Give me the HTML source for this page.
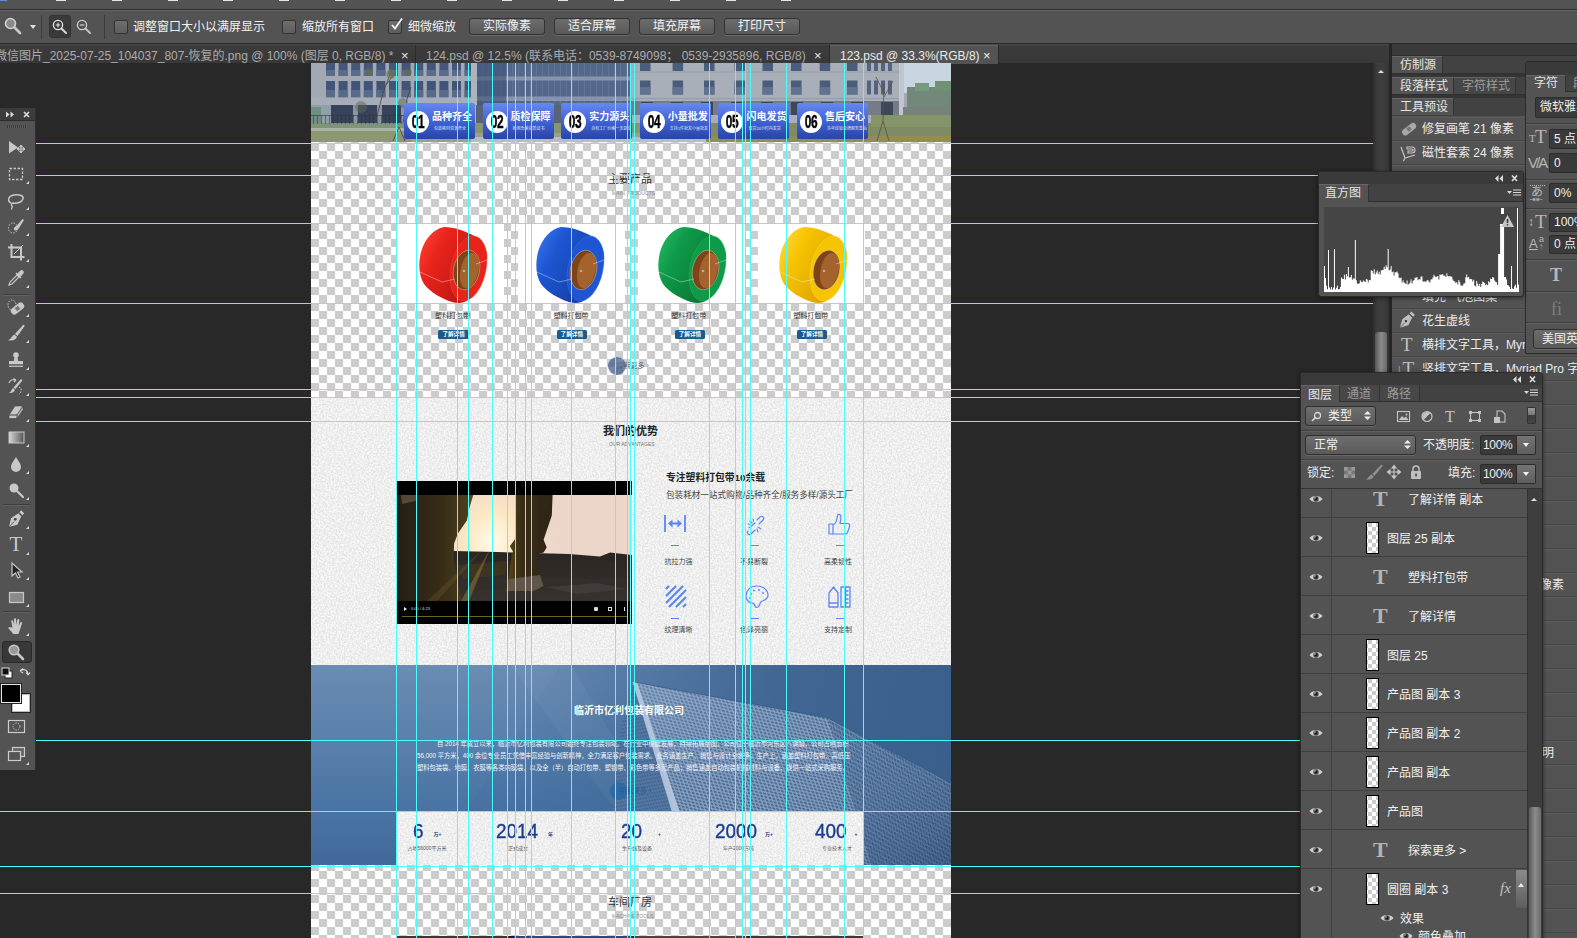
<!DOCTYPE html>
<html lang="zh-CN"><head><meta charset="utf-8"><title>Photoshop</title>
<style>
*{box-sizing:border-box}
html,body{margin:0;padding:0;overflow:hidden}
html{width:1577px;height:938px;background:#282828}
body{width:1577px;height:938px;overflow:hidden;background:#282828;position:relative;
 font-family:"Liberation Sans","Noto Sans CJK SC",sans-serif;font-size:12px;color:#e6e6e6;line-height:1}
.a{position:absolute}
.t{position:absolute;white-space:nowrap}
svg{position:absolute;overflow:visible}
#topstrip{left:0;top:0;width:1577px;height:9px;background:#535353}
#optbar{left:0;top:10px;width:1577px;height:33px;background:#535353;border-top:1px solid #666}
#tabbar{left:0;top:44px;width:1389px;height:19px;background:linear-gradient(#3c3c3c,#383838);border-top:1px solid #484848}
.cb{position:absolute;width:14px;height:14px;top:9px;border:1px solid #333;border-radius:2px;background:linear-gradient(#6f6f6f,#5d5d5d)}
.btn{position:absolute;top:7px;height:17px;width:76px;border:1px solid #333;border-radius:3px;background:linear-gradient(#6c6c6c,#595959);text-align:center;line-height:15px;color:#f0f0f0;box-shadow:0 1px 0 #6a6a6a}
.tab{position:absolute;top:0;height:19px;line-height:22px;color:#ababab;white-space:nowrap}
.hg{position:absolute;left:0;width:1373px;height:1px;background:#4afcfc}
.vg{position:absolute;top:0;width:1px;height:874px;background:#4afcfc}
</style></head><body>
<div class="a" id="topstrip"></div>
<div class="a" style="left:0;top:0;width:7px;height:1px;background:#5a8fd8"></div>
<div class="a" style="left:56.0px;top:0;width:10px;height:1px;background:#ece6da"></div>
<div class="a" style="left:111.8px;top:0;width:10px;height:1px;background:#ece6da"></div>
<div class="a" style="left:167.6px;top:0;width:10px;height:1px;background:#ece6da"></div>
<div class="a" style="left:223.4px;top:0;width:10px;height:1px;background:#ece6da"></div>
<div class="a" style="left:279.2px;top:0;width:10px;height:1px;background:#ece6da"></div>
<div class="a" style="left:335.0px;top:0;width:10px;height:1px;background:#ece6da"></div>
<div class="a" style="left:390.8px;top:0;width:10px;height:1px;background:#ece6da"></div>
<div class="a" style="left:446.6px;top:0;width:10px;height:1px;background:#ece6da"></div>
<div class="a" style="left:502.4px;top:0;width:10px;height:1px;background:#ece6da"></div>
<div class="a" style="left:558.2px;top:0;width:10px;height:1px;background:#ece6da"></div>
<div class="a" style="left:614.0px;top:0;width:10px;height:1px;background:#ece6da"></div>
<div class="a" style="left:669.8px;top:0;width:10px;height:1px;background:#ece6da"></div>
<div class="a" style="left:725.6px;top:0;width:10px;height:1px;background:#ece6da"></div>
<div class="a" style="left:781.4px;top:0;width:10px;height:1px;background:#ece6da"></div>
<div class="a" style="left:0;top:9px;width:1577px;height:1px;background:#2c2c2c"></div>
<div class="a" id="optbar">
<svg style="left:4px;top:6px" width="18" height="18" viewBox="0 0 18 18"><circle cx="6.5" cy="6.5" r="5" fill="#8a8a8a" stroke="#cfcfcf" stroke-width="1.6"/><path d="M10.5 10.5 L16 16" stroke="#c8c8c8" stroke-width="2.6" stroke-linecap="round"/></svg>
<div class="a" style="left:30px;top:14px;width:0;height:0;border-left:3px solid transparent;border-right:3px solid transparent;border-top:4px solid #e0e0e0"></div>
<div class="a" style="left:41px;top:4px;width:1px;height:24px;background:#3c3c3c"></div>
<div class="a" style="left:49px;top:4px;width:22px;height:23px;background:#3a3a3a;border-radius:3px;border:1px solid #333"></div>
<svg style="left:52px;top:8px" width="16" height="16" viewBox="0 0 16 16"><circle cx="6" cy="6" r="4.6" fill="none" stroke="#e6e6e6" stroke-width="1.3"/><path d="M9.5 9.5 L14 14" stroke="#d8d8d8" stroke-width="2" stroke-linecap="round"/><path d="M3.8 6h4.4M6 3.8v4.4" stroke="#e6e6e6" stroke-width="1.2"/></svg>
<svg style="left:76px;top:8px" width="16" height="16" viewBox="0 0 16 16"><circle cx="6" cy="6" r="4.6" fill="none" stroke="#d0d0d0" stroke-width="1.3"/><path d="M9.5 9.5 L14 14" stroke="#c4c4c4" stroke-width="2" stroke-linecap="round"/><path d="M3.8 6h4.4" stroke="#d0d0d0" stroke-width="1.2"/></svg>
<div class="a" style="left:104px;top:4px;width:1px;height:24px;background:#3c3c3c"></div>
<div class="cb" style="left:114px"></div><div class="t" style="left:133px;top:10px;color:#f2f2f2">调整窗口大小以满屏显示</div>
<div class="cb" style="left:282px"></div><div class="t" style="left:302px;top:10px;color:#f2f2f2">缩放所有窗口</div>
<div class="cb" style="left:388px"></div><svg style="left:390px;top:6px" width="14" height="14" viewBox="0 0 14 14"><path d="M2 8 L5 11.5 L12 1.5" fill="none" stroke="#f4f4f4" stroke-width="1.8"/></svg><div class="t" style="left:408px;top:10px;color:#f2f2f2">细微缩放</div>
<div class="btn" style="left:469px">实际像素</div>
<div class="btn" style="left:554px">适合屏幕</div>
<div class="btn" style="left:639px">填充屏幕</div>
<div class="btn" style="left:724px">打印尺寸</div>
</div>
<div class="a" style="left:0;top:43px;width:1577px;height:1px;background:#2a2a2a"></div>
<div class="a" id="tabbar">
<div class="tab" style="left:-5px">微信图片_2025-07-25_104037_807-恢复的.png @ 100% (图层 0, RGB/8) *</div>
<div class="tab" style="left:401px;color:#e8e8e8;font-size:13px">×</div>
<div class="a" style="left:415px;top:0;width:1px;height:19px;background:#2a2a2a"></div>
<div class="tab" style="left:426px">124.psd @ 12.5% (联系电话：0539-8749098； 0539-2935896, RGB/8)</div>
<div class="tab" style="left:814px;color:#e8e8e8;font-size:13px">×</div>
<div class="a" style="left:829px;top:0;width:1px;height:19px;background:#2a2a2a"></div>
<div class="a" style="left:830px;top:0;width:168px;height:19px;background:#535353;border-top:1px solid #666"></div>
<div class="tab" style="left:840px;color:#eaeaea">123.psd @ 33.3%(RGB/8)</div>
<div class="tab" style="left:983px;color:#f0f0f0;font-size:13px">×</div>
<div class="a" style="left:998px;top:0;width:1px;height:19px;background:#2a2a2a"></div>
</div>
<div class="a" id="doc" style="left:311px;top:63px;width:640px;height:875px;overflow:hidden"><div class="a" id="inner" style="left:-311px;top:-63px;width:1577px;height:938px">
<div class="a" style="left:311px;top:63px;width:640px;height:875px;background:conic-gradient(#fff 25%,#ccc 0 50%,#fff 0 75%,#ccc 0);background-size:16px 16px;background-position:0 0"></div>
<svg style="left:311px;top:63px" width="640" height="79" viewBox="0 0 640 79"><g filter="url(#bl)"><rect x="0.0" y="0.0" width="640.0" height="79.0" fill="#a2a9b4"/><rect x="15.0" y="0.0" width="9.0" height="13.0" fill="#45577a"/><rect x="15.0" y="7.0" width="9.0" height="6.0" fill="#5a6c8c"/><rect x="15.0" y="18.0" width="9.0" height="16.5" fill="#435578"/><rect x="15.0" y="27.0" width="9.0" height="7.5" fill="#586a8a"/><rect x="27.6" y="0.0" width="9.0" height="13.0" fill="#45577a"/><rect x="27.6" y="7.0" width="9.0" height="6.0" fill="#5a6c8c"/><rect x="27.6" y="18.0" width="9.0" height="16.5" fill="#435578"/><rect x="27.6" y="27.0" width="9.0" height="7.5" fill="#586a8a"/><rect x="40.2" y="0.0" width="9.0" height="13.0" fill="#45577a"/><rect x="40.2" y="7.0" width="9.0" height="6.0" fill="#5a6c8c"/><rect x="40.2" y="18.0" width="9.0" height="16.5" fill="#435578"/><rect x="40.2" y="27.0" width="9.0" height="7.5" fill="#586a8a"/><rect x="52.8" y="0.0" width="9.0" height="13.0" fill="#45577a"/><rect x="52.8" y="7.0" width="9.0" height="6.0" fill="#5a6c8c"/><rect x="52.8" y="18.0" width="9.0" height="16.5" fill="#435578"/><rect x="52.8" y="27.0" width="9.0" height="7.5" fill="#586a8a"/><rect x="65.4" y="0.0" width="9.0" height="13.0" fill="#45577a"/><rect x="65.4" y="7.0" width="9.0" height="6.0" fill="#5a6c8c"/><rect x="65.4" y="18.0" width="9.0" height="16.5" fill="#435578"/><rect x="65.4" y="27.0" width="9.0" height="7.5" fill="#586a8a"/><rect x="78.0" y="0.0" width="9.0" height="13.0" fill="#45577a"/><rect x="78.0" y="7.0" width="9.0" height="6.0" fill="#5a6c8c"/><rect x="78.0" y="18.0" width="9.0" height="16.5" fill="#435578"/><rect x="78.0" y="27.0" width="9.0" height="7.5" fill="#586a8a"/><rect x="90.6" y="0.0" width="9.0" height="13.0" fill="#45577a"/><rect x="90.6" y="7.0" width="9.0" height="6.0" fill="#5a6c8c"/><rect x="90.6" y="18.0" width="9.0" height="16.5" fill="#435578"/><rect x="90.6" y="27.0" width="9.0" height="7.5" fill="#586a8a"/><rect x="103.2" y="0.0" width="9.0" height="13.0" fill="#45577a"/><rect x="103.2" y="7.0" width="9.0" height="6.0" fill="#5a6c8c"/><rect x="103.2" y="18.0" width="9.0" height="16.5" fill="#435578"/><rect x="103.2" y="27.0" width="9.0" height="7.5" fill="#586a8a"/><rect x="115.8" y="0.0" width="9.0" height="13.0" fill="#45577a"/><rect x="115.8" y="7.0" width="9.0" height="6.0" fill="#5a6c8c"/><rect x="115.8" y="18.0" width="9.0" height="16.5" fill="#435578"/><rect x="115.8" y="27.0" width="9.0" height="7.5" fill="#586a8a"/><rect x="128.4" y="0.0" width="9.0" height="13.0" fill="#45577a"/><rect x="128.4" y="7.0" width="9.0" height="6.0" fill="#5a6c8c"/><rect x="128.4" y="18.0" width="9.0" height="16.5" fill="#435578"/><rect x="128.4" y="27.0" width="9.0" height="7.5" fill="#586a8a"/><rect x="141.0" y="0.0" width="9.0" height="13.0" fill="#45577a"/><rect x="141.0" y="7.0" width="9.0" height="6.0" fill="#5a6c8c"/><rect x="141.0" y="18.0" width="9.0" height="16.5" fill="#435578"/><rect x="141.0" y="27.0" width="9.0" height="7.5" fill="#586a8a"/><rect x="153.6" y="0.0" width="9.0" height="13.0" fill="#45577a"/><rect x="153.6" y="7.0" width="9.0" height="6.0" fill="#5a6c8c"/><rect x="153.6" y="18.0" width="9.0" height="16.5" fill="#435578"/><rect x="153.6" y="27.0" width="9.0" height="7.5" fill="#586a8a"/><rect x="0.0" y="34.5" width="165.0" height="7.5" fill="#a7adb8"/><rect x="20.0" y="42.0" width="145.0" height="18.0" fill="#39435a"/><rect x="42.0" y="42.0" width="5.0" height="18.0" fill="#8d95a2"/><rect x="66.0" y="42.0" width="5.0" height="18.0" fill="#8d95a2"/><rect x="90.0" y="42.0" width="5.0" height="18.0" fill="#8d95a2"/><rect x="114.0" y="42.0" width="5.0" height="18.0" fill="#8d95a2"/><rect x="138.0" y="42.0" width="5.0" height="18.0" fill="#8d95a2"/><rect x="162.0" y="42.0" width="5.0" height="18.0" fill="#8d95a2"/><rect x="0.0" y="42.0" width="20.0" height="18.0" fill="#8fa0a8"/><rect x="0.0" y="44.0" width="10.0" height="16.0" fill="#6f8f84"/><rect x="165.0" y="0.0" width="155.0" height="42.0" fill="#55688b"/><rect x="165.0" y="0.0" width="1.0" height="42.0" fill="#6a80a2" opacity=".5"/><rect x="171.0" y="0.0" width="1.0" height="42.0" fill="#6a80a2" opacity=".5"/><rect x="177.0" y="0.0" width="1.0" height="42.0" fill="#6a80a2" opacity=".5"/><rect x="183.0" y="0.0" width="1.0" height="42.0" fill="#6a80a2" opacity=".5"/><rect x="189.0" y="0.0" width="1.0" height="42.0" fill="#6a80a2" opacity=".5"/><rect x="195.0" y="0.0" width="1.0" height="42.0" fill="#6a80a2" opacity=".5"/><rect x="201.0" y="0.0" width="1.0" height="42.0" fill="#6a80a2" opacity=".5"/><rect x="207.0" y="0.0" width="1.0" height="42.0" fill="#6a80a2" opacity=".5"/><rect x="213.0" y="0.0" width="1.0" height="42.0" fill="#6a80a2" opacity=".5"/><rect x="219.0" y="0.0" width="1.0" height="42.0" fill="#6a80a2" opacity=".5"/><rect x="225.0" y="0.0" width="1.0" height="42.0" fill="#6a80a2" opacity=".5"/><rect x="231.0" y="0.0" width="1.0" height="42.0" fill="#6a80a2" opacity=".5"/><rect x="237.0" y="0.0" width="1.0" height="42.0" fill="#6a80a2" opacity=".5"/><rect x="243.0" y="0.0" width="1.0" height="42.0" fill="#6a80a2" opacity=".5"/><rect x="249.0" y="0.0" width="1.0" height="42.0" fill="#6a80a2" opacity=".5"/><rect x="255.0" y="0.0" width="1.0" height="42.0" fill="#6a80a2" opacity=".5"/><rect x="261.0" y="0.0" width="1.0" height="42.0" fill="#6a80a2" opacity=".5"/><rect x="267.0" y="0.0" width="1.0" height="42.0" fill="#6a80a2" opacity=".5"/><rect x="273.0" y="0.0" width="1.0" height="42.0" fill="#6a80a2" opacity=".5"/><rect x="279.0" y="0.0" width="1.0" height="42.0" fill="#6a80a2" opacity=".5"/><rect x="285.0" y="0.0" width="1.0" height="42.0" fill="#6a80a2" opacity=".5"/><rect x="291.0" y="0.0" width="1.0" height="42.0" fill="#6a80a2" opacity=".5"/><rect x="297.0" y="0.0" width="1.0" height="42.0" fill="#6a80a2" opacity=".5"/><rect x="303.0" y="0.0" width="1.0" height="42.0" fill="#6a80a2" opacity=".5"/><rect x="309.0" y="0.0" width="1.0" height="42.0" fill="#6a80a2" opacity=".5"/><rect x="315.0" y="0.0" width="1.0" height="42.0" fill="#6a80a2" opacity=".5"/><rect x="165.0" y="13.5" width="155.0" height="4.0" fill="#8795aa"/><rect x="165.0" y="33.5" width="155.0" height="4.5" fill="#8795aa"/><rect x="165.0" y="0.0" width="30.0" height="42.0" fill="#3f5378" opacity=".6"/><rect x="160.0" y="0.0" width="6.0" height="60.0" fill="#aeb4bd"/><rect x="165.0" y="42.0" width="155.0" height="18.0" fill="#59647a"/><rect x="320.0" y="0.0" width="272.0" height="60.0" fill="#a9afb9"/><rect x="329.0" y="0.0" width="10.5" height="8.0" fill="#4c5d7c"/><rect x="329.0" y="17.5" width="10.5" height="14.0" fill="#4a5b7a"/><rect x="329.0" y="24.0" width="10.5" height="7.5" fill="#61728e"/><rect x="361.6" y="0.0" width="10.5" height="8.0" fill="#4c5d7c"/><rect x="361.6" y="17.5" width="10.5" height="14.0" fill="#4a5b7a"/><rect x="361.6" y="24.0" width="10.5" height="7.5" fill="#61728e"/><rect x="393.0" y="0.0" width="10.5" height="8.0" fill="#4c5d7c"/><rect x="393.0" y="17.5" width="10.5" height="14.0" fill="#4a5b7a"/><rect x="393.0" y="24.0" width="10.5" height="7.5" fill="#61728e"/><rect x="423.5" y="0.0" width="10.5" height="8.0" fill="#4c5d7c"/><rect x="423.5" y="17.5" width="10.5" height="14.0" fill="#4a5b7a"/><rect x="423.5" y="24.0" width="10.5" height="7.5" fill="#61728e"/><rect x="451.5" y="0.0" width="10.5" height="8.0" fill="#4c5d7c"/><rect x="451.5" y="17.5" width="10.5" height="14.0" fill="#4a5b7a"/><rect x="451.5" y="24.0" width="10.5" height="7.5" fill="#61728e"/><rect x="480.0" y="0.0" width="10.5" height="8.0" fill="#4c5d7c"/><rect x="480.0" y="17.5" width="10.5" height="14.0" fill="#4a5b7a"/><rect x="480.0" y="24.0" width="10.5" height="7.5" fill="#61728e"/><rect x="508.7" y="0.0" width="10.5" height="8.0" fill="#4c5d7c"/><rect x="508.7" y="17.5" width="10.5" height="14.0" fill="#4a5b7a"/><rect x="508.7" y="24.0" width="10.5" height="7.5" fill="#61728e"/><rect x="536.0" y="0.0" width="10.5" height="8.0" fill="#4c5d7c"/><rect x="536.0" y="17.5" width="10.5" height="14.0" fill="#4a5b7a"/><rect x="536.0" y="24.0" width="10.5" height="7.5" fill="#61728e"/><rect x="556.0" y="0.0" width="4.0" height="8.0" fill="#55647e"/><rect x="556.0" y="17.5" width="4.0" height="14.0" fill="#55647e"/><rect x="563.0" y="0.0" width="4.0" height="8.0" fill="#55647e"/><rect x="563.0" y="17.5" width="4.0" height="14.0" fill="#55647e"/><rect x="570.0" y="0.0" width="4.0" height="8.0" fill="#55647e"/><rect x="570.0" y="17.5" width="4.0" height="14.0" fill="#55647e"/><rect x="577.0" y="0.0" width="4.0" height="8.0" fill="#55647e"/><rect x="577.0" y="17.5" width="4.0" height="14.0" fill="#55647e"/><rect x="320.0" y="8.5" width="272.0" height="1.0" fill="#9aa0aa"/><rect x="320.0" y="35.0" width="272.0" height="1.2" fill="#979da7"/><rect x="320.0" y="38.0" width="272.0" height="14.0" fill="#747c88"/><rect x="330.0" y="39.0" width="12.0" height="13.0" fill="#3e4656"/><rect x="360.0" y="39.0" width="12.0" height="13.0" fill="#3e4656"/><rect x="390.0" y="39.0" width="12.0" height="13.0" fill="#3e4656"/><rect x="420.0" y="39.0" width="12.0" height="13.0" fill="#3e4656"/><rect x="450.0" y="39.0" width="12.0" height="13.0" fill="#3e4656"/><rect x="480.0" y="39.0" width="12.0" height="13.0" fill="#3e4656"/><rect x="510.0" y="39.0" width="12.0" height="13.0" fill="#3e4656"/><rect x="540.0" y="39.0" width="12.0" height="13.0" fill="#3e4656"/><rect x="570.0" y="39.0" width="12.0" height="13.0" fill="#3e4656"/><rect x="592.0" y="0.0" width="48.0" height="30.0" fill="#c9d5e1"/><rect x="588.0" y="0.0" width="5.0" height="52.0" fill="#c2c6cc"/><rect x="596.0" y="24.0" width="44.0" height="24.0" fill="#71887a"/><rect x="604.0" y="20.0" width="14.0" height="8.0" fill="#789a7c"/><rect x="624.0" y="18.0" width="16.0" height="10.0" fill="#6f9174"/><rect x="592.0" y="44.0" width="48.0" height="8.0" fill="#76827c"/><rect x="0.0" y="60.0" width="640.0" height="19.0" fill="#87956f"/><rect x="0.0" y="60.0" width="100.0" height="6.0" fill="#7f9478"/><rect x="0.0" y="65.0" width="100.0" height="3.0" fill="#a9b3a6"/><rect x="0.0" y="68.0" width="100.0" height="11.0" fill="#8b9872"/><rect x="100.0" y="70.0" width="300.0" height="9.0" fill="#9aa08c"/><rect x="160.0" y="74.0" width="240.0" height="5.0" fill="#b9bdc2"/><rect x="400.0" y="60.0" width="240.0" height="19.0" fill="#7f8b66"/><rect x="395.0" y="73.0" width="245.0" height="6.0" fill="#8f8f50"/><rect x="560.0" y="52.0" width="80.0" height="12.0" fill="#86946a"/><rect x="2.0" y="52.0" width="0.7" height="9.0" fill="#2c3438" opacity=".7"/><rect x="6.0" y="52.0" width="0.7" height="9.0" fill="#2c3438" opacity=".7"/><rect x="10.0" y="52.0" width="0.7" height="9.0" fill="#2c3438" opacity=".7"/><rect x="14.0" y="52.0" width="0.7" height="9.0" fill="#2c3438" opacity=".7"/><rect x="18.0" y="52.0" width="0.7" height="9.0" fill="#2c3438" opacity=".7"/><rect x="22.0" y="52.0" width="0.7" height="9.0" fill="#2c3438" opacity=".7"/><rect x="26.0" y="52.0" width="0.7" height="9.0" fill="#2c3438" opacity=".7"/><rect x="30.0" y="52.0" width="0.7" height="9.0" fill="#2c3438" opacity=".7"/><rect x="34.0" y="52.0" width="0.7" height="9.0" fill="#2c3438" opacity=".7"/><rect x="38.0" y="52.0" width="0.7" height="9.0" fill="#2c3438" opacity=".7"/><rect x="42.0" y="52.0" width="0.7" height="9.0" fill="#2c3438" opacity=".7"/><rect x="46.0" y="52.0" width="0.7" height="9.0" fill="#2c3438" opacity=".7"/><rect x="50.0" y="52.0" width="0.7" height="9.0" fill="#2c3438" opacity=".7"/><rect x="54.0" y="52.0" width="0.7" height="9.0" fill="#2c3438" opacity=".7"/><rect x="58.0" y="52.0" width="0.7" height="9.0" fill="#2c3438" opacity=".7"/><rect x="62.0" y="52.0" width="0.7" height="9.0" fill="#2c3438" opacity=".7"/><rect x="66.0" y="52.0" width="0.7" height="9.0" fill="#2c3438" opacity=".7"/><rect x="70.0" y="52.0" width="0.7" height="9.0" fill="#2c3438" opacity=".7"/><rect x="74.0" y="52.0" width="0.7" height="9.0" fill="#2c3438" opacity=".7"/><rect x="78.0" y="52.0" width="0.7" height="9.0" fill="#2c3438" opacity=".7"/><rect x="82.0" y="52.0" width="0.7" height="9.0" fill="#2c3438" opacity=".7"/><rect x="86.0" y="52.0" width="0.7" height="9.0" fill="#2c3438" opacity=".7"/><rect x="90.0" y="52.0" width="0.7" height="9.0" fill="#2c3438" opacity=".7"/><rect x="94.0" y="52.0" width="0.7" height="9.0" fill="#2c3438" opacity=".7"/><rect x="0.0" y="52.0" width="96.0" height="0.8" fill="#2c3438" opacity=".7"/><path d="M64 60 L72 30 L78 14 M72 30 L66 18 M75 22 L84 10 M92 60 L96 36 L100 24 M82 78 L88 64 L94 78" stroke="#4a4638" stroke-width="1" fill="none" opacity=".8"/><circle cx="58" cy="9" r="4" fill="#5f6a4c" opacity=".7"/><circle cx="80" cy="11" r="4.500" fill="#66704e" opacity=".7"/><circle cx="97" cy="9" r="3.500" fill="#5f6a4c" opacity=".7"/><circle cx="50" cy="44" r="6" fill="#5c6c58" opacity=".5"/><circle cx="92" cy="40" r="5" fill="#5c6c58" opacity=".5"/><path d="M566 78 L572 58 L578 78 M572 58 L573 20 M573 30 L565 14 M573 34 L582 18" stroke="#5a5244" stroke-width="1" fill="none" opacity=".8"/></g><defs><filter id="bl" x="0" y="0" width="100%" height="100%"><feGaussianBlur stdDeviation="0.45"/></filter></defs></svg>
<div class="a" style="left:404.0px;top:103px;width:71px;height:36px;border-radius:2px;background:linear-gradient(#6688f2,#3c5ccc 60%,#2a44a6)">
<div class="a" style="left:3px;top:7.500px;width:22px;height:22px;border-radius:11px;background:#fff;"></div><div class="a" style="left:3px;top:7.500px;width:22px;height:22px;transform:scaleX(.66);color:#000;font-weight:bold;font-size:18px;line-height:22.5px;text-align:center;letter-spacing:-.5px;-webkit-text-stroke:.45px #000">01</div>
<div class="t" style="left:28px;top:8.500px;font-size:10px;font-weight:bold;color:#fff">品种齐全</div>
<div class="t" style="left:30px;top:23.500px;font-size:4px;color:#dfe6ff;transform-origin:0 0">包装耗材资源齐全</div>
</div>
<div class="a" style="left:482.6px;top:103px;width:71px;height:36px;border-radius:2px;background:linear-gradient(#6688f2,#3c5ccc 60%,#2a44a6)">
<div class="a" style="left:3px;top:7.500px;width:22px;height:22px;border-radius:11px;background:#fff;"></div><div class="a" style="left:3px;top:7.500px;width:22px;height:22px;transform:scaleX(.66);color:#000;font-weight:bold;font-size:18px;line-height:22.5px;text-align:center;letter-spacing:-.5px;-webkit-text-stroke:.45px #000">02</div>
<div class="t" style="left:28px;top:8.500px;font-size:10px;font-weight:bold;color:#fff">质检保障</div>
<div class="t" style="left:30px;top:23.500px;font-size:4px;color:#dfe6ff;transform-origin:0 0">检测合格资质证书</div>
</div>
<div class="a" style="left:561.2px;top:103px;width:71px;height:36px;border-radius:2px;background:linear-gradient(#6688f2,#3c5ccc 60%,#2a44a6)">
<div class="a" style="left:3px;top:7.500px;width:22px;height:22px;border-radius:11px;background:#fff;"></div><div class="a" style="left:3px;top:7.500px;width:22px;height:22px;transform:scaleX(.66);color:#000;font-weight:bold;font-size:18px;line-height:22.5px;text-align:center;letter-spacing:-.5px;-webkit-text-stroke:.45px #000">03</div>
<div class="t" style="left:28px;top:8.500px;font-size:10px;font-weight:bold;color:#fff">实力源头</div>
<div class="t" style="left:30px;top:23.500px;font-size:4px;color:#dfe6ff;transform-origin:0 0">自有工厂价格一步到位</div>
</div>
<div class="a" style="left:639.8px;top:103px;width:71px;height:36px;border-radius:2px;background:linear-gradient(#6688f2,#3c5ccc 60%,#2a44a6)">
<div class="a" style="left:3px;top:7.500px;width:22px;height:22px;border-radius:11px;background:#fff;"></div><div class="a" style="left:3px;top:7.500px;width:22px;height:22px;transform:scaleX(.66);color:#000;font-weight:bold;font-size:18px;line-height:22.5px;text-align:center;letter-spacing:-.5px;-webkit-text-stroke:.45px #000">04</div>
<div class="t" style="left:28px;top:8.500px;font-size:10px;font-weight:bold;color:#fff">小量批发</div>
<div class="t" style="left:30px;top:23.500px;font-size:4px;color:#dfe6ff;transform-origin:0 0">支持1件批发小量批发</div>
</div>
<div class="a" style="left:718.4px;top:103px;width:71px;height:36px;border-radius:2px;background:linear-gradient(#6688f2,#3c5ccc 60%,#2a44a6)">
<div class="a" style="left:3px;top:7.500px;width:22px;height:22px;border-radius:11px;background:#fff;"></div><div class="a" style="left:3px;top:7.500px;width:22px;height:22px;transform:scaleX(.66);color:#000;font-weight:bold;font-size:18px;line-height:22.5px;text-align:center;letter-spacing:-.5px;-webkit-text-stroke:.45px #000">05</div>
<div class="t" style="left:28px;top:8.500px;font-size:10px;font-weight:bold;color:#fff">闪电发货</div>
<div class="t" style="left:30px;top:23.500px;font-size:4px;color:#dfe6ff;transform-origin:0 0">现货24小时内发货</div>
</div>
<div class="a" style="left:797.0px;top:103px;width:71px;height:36px;border-radius:2px;background:linear-gradient(#6688f2,#3c5ccc 60%,#2a44a6)">
<div class="a" style="left:3px;top:7.500px;width:22px;height:22px;border-radius:11px;background:#fff;"></div><div class="a" style="left:3px;top:7.500px;width:22px;height:22px;transform:scaleX(.66);color:#000;font-weight:bold;font-size:18px;line-height:22.5px;text-align:center;letter-spacing:-.5px;-webkit-text-stroke:.45px #000">06</div>
<div class="t" style="left:28px;top:8.500px;font-size:10px;font-weight:bold;color:#fff">售后安心</div>
<div class="t" style="left:30px;top:23.500px;font-size:4px;color:#dfe6ff;transform-origin:0 0">多年经验金牌服务售后</div>
</div>
<div class="t" style="left:608px;top:174px;font-size:11px;color:#333">主要产品</div>
<div class="t" style="left:612px;top:191px;font-size:5px;color:#8a8a8a;letter-spacing:.1px">MAIN PRODUCTS</div>
<div class="a" style="left:397px;top:224px;width:107px;height:79px;background:#fff"></div>
<svg style="left:398px;top:224px" width="107" height="79" viewBox="0 0 107 79">
<defs><linearGradient id="rg0" x1="0" y1="0" x2="1" y2=".6"><stop offset="0" stop-color="#ff4a38"/><stop offset=".35" stop-color="#e8231c"/><stop offset="1" stop-color="#b51410"/></linearGradient></defs>
<path d="M46 3 C36 5 27 14 23 28 C20 40 21 52 26 60 C32 68 44 75 54 78 C60 80 66 79 70 76 C80 68 87 52 89 36 C90 26 86 18 78 13 C68 7 56 3 46 3 Z" fill="url(#rg0)"/>
<ellipse cx="70.500" cy="44.500" rx="17.500" ry="33" transform="rotate(12 70.500 44.500)" fill="#e8231c" stroke="#ff4a38" stroke-width=".7" stroke-opacity=".6"/>
<ellipse cx="68.500" cy="46" rx="13" ry="20" transform="rotate(12 68.500 46)" fill="#7c4418" stroke="#e8d8c0" stroke-width=".4"/>
<ellipse cx="71.500" cy="46.500" rx="9" ry="18" transform="rotate(12 71.500 46.500)" fill="#a4622c"/>
<circle cx="66" cy="47" r="1.300" fill="#b8b0a8"/>
<path d="M22 48 L44 58 L57 55 M78 40 L89 36" stroke="#fff" stroke-width=".5" fill="none" opacity=".75"/>
</svg>
<div class="t" style="left:422.4px;top:312px;width:60px;text-align:center;font-size:7px;color:#333">塑料打包带</div>
<div class="a" style="left:438.4px;top:330px;width:30.4px;height:8.6px;background:#185b8e;border-radius:1.5px;color:#fff;font-size:5.6px;line-height:8.6px;text-align:center;font-weight:bold">了解详情</div>
<div class="a" style="left:518px;top:224px;width:107px;height:79px;background:#fff"></div>
<svg style="left:515px;top:224px" width="107" height="79" viewBox="0 0 107 79">
<defs><linearGradient id="rg1" x1="0" y1="0" x2="1" y2=".6"><stop offset="0" stop-color="#3a7af0"/><stop offset=".35" stop-color="#1d55d2"/><stop offset="1" stop-color="#123c9c"/></linearGradient></defs>
<path d="M46 3 C36 5 27 14 23 28 C20 40 21 52 26 60 C32 68 44 75 54 78 C60 80 66 79 70 76 C80 68 87 52 89 36 C90 26 86 18 78 13 C68 7 56 3 46 3 Z" fill="url(#rg1)"/>
<ellipse cx="70.500" cy="44.500" rx="17.500" ry="33" transform="rotate(12 70.500 44.500)" fill="#1d55d2" stroke="#3a7af0" stroke-width=".7" stroke-opacity=".6"/>
<ellipse cx="68.500" cy="46" rx="13" ry="20" transform="rotate(12 68.500 46)" fill="#7c4418" stroke="#e8d8c0" stroke-width=".4"/>
<ellipse cx="71.500" cy="46.500" rx="9" ry="18" transform="rotate(12 71.500 46.500)" fill="#a4622c"/>
<circle cx="66" cy="47" r="1.300" fill="#b8b0a8"/>
<path d="M22 48 L44 58 L57 55 M78 40 L89 36" stroke="#fff" stroke-width=".5" fill="none" opacity=".75"/>
</svg>
<div class="t" style="left:541.1px;top:312px;width:60px;text-align:center;font-size:7px;color:#333">塑料打包带</div>
<div class="a" style="left:556.6px;top:330px;width:30.4px;height:8.6px;background:#185b8e;border-radius:1.5px;color:#fff;font-size:5.6px;line-height:8.6px;text-align:center;font-weight:bold">了解详情</div>
<div class="a" style="left:638px;top:224px;width:107px;height:79px;background:#fff"></div>
<svg style="left:637px;top:224px" width="107" height="79" viewBox="0 0 107 79">
<defs><linearGradient id="rg2" x1="0" y1="0" x2="1" y2=".6"><stop offset="0" stop-color="#28c06a"/><stop offset=".35" stop-color="#0e9a48"/><stop offset="1" stop-color="#08702f"/></linearGradient></defs>
<path d="M46 3 C36 5 27 14 23 28 C20 40 21 52 26 60 C32 68 44 75 54 78 C60 80 66 79 70 76 C80 68 87 52 89 36 C90 26 86 18 78 13 C68 7 56 3 46 3 Z" fill="url(#rg2)"/>
<ellipse cx="70.500" cy="44.500" rx="17.500" ry="33" transform="rotate(12 70.500 44.500)" fill="#0e9a48" stroke="#28c06a" stroke-width=".7" stroke-opacity=".6"/>
<ellipse cx="68.500" cy="46" rx="13" ry="20" transform="rotate(12 68.500 46)" fill="#7c4418" stroke="#e8d8c0" stroke-width=".4"/>
<ellipse cx="71.500" cy="46.500" rx="9" ry="18" transform="rotate(12 71.500 46.500)" fill="#a4622c"/>
<circle cx="66" cy="47" r="1.300" fill="#b8b0a8"/>
<path d="M22 48 L44 58 L57 55 M78 40 L89 36" stroke="#fff" stroke-width=".5" fill="none" opacity=".75"/>
</svg>
<div class="t" style="left:658.8px;top:312px;width:60px;text-align:center;font-size:7px;color:#333">塑料打包带</div>
<div class="a" style="left:674.7px;top:330px;width:30.4px;height:8.6px;background:#185b8e;border-radius:1.5px;color:#fff;font-size:5.6px;line-height:8.6px;text-align:center;font-weight:bold">了解详情</div>
<div class="a" style="left:758px;top:224px;width:107px;height:79px;background:#fff"></div>
<svg style="left:758px;top:224px" width="107" height="79" viewBox="0 0 107 79">
<defs><linearGradient id="rg3" x1="0" y1="0" x2="1" y2=".6"><stop offset="0" stop-color="#ffe04a"/><stop offset=".35" stop-color="#f6c400"/><stop offset="1" stop-color="#d89c00"/></linearGradient></defs>
<path d="M46 3 C36 5 27 14 23 28 C20 40 21 52 26 60 C32 68 44 75 54 78 C60 80 66 79 70 76 C80 68 87 52 89 36 C90 26 86 18 78 13 C68 7 56 3 46 3 Z" fill="url(#rg3)"/>
<ellipse cx="70.500" cy="44.500" rx="17.500" ry="33" transform="rotate(12 70.500 44.500)" fill="#f6c400" stroke="#ffe04a" stroke-width=".7" stroke-opacity=".6"/>
<ellipse cx="68.500" cy="46" rx="13" ry="20" transform="rotate(12 68.500 46)" fill="#7c4418" stroke="#e8d8c0" stroke-width=".4"/>
<ellipse cx="71.500" cy="46.500" rx="9" ry="18" transform="rotate(12 71.500 46.500)" fill="#a4622c"/>
<circle cx="66" cy="47" r="1.300" fill="#b8b0a8"/>
<path d="M22 48 L44 58 L57 55 M78 40 L89 36" stroke="#fff" stroke-width=".5" fill="none" opacity=".75"/>
</svg>
<div class="t" style="left:780.7px;top:312px;width:60px;text-align:center;font-size:7px;color:#333">塑料打包带</div>
<div class="a" style="left:796.7px;top:330px;width:30.4px;height:8.6px;background:#185b8e;border-radius:1.5px;color:#fff;font-size:5.6px;line-height:8.6px;text-align:center;font-weight:bold">了解详情</div>
<div class="a" style="left:608px;top:357px;width:17.5px;height:18px;border-radius:9px;background:rgba(58,90,140,.72)"></div>
<div class="t" style="left:616.5px;top:361.5px;font-size:7px;color:#5a6478">探索更多 ›</div>
<svg width="0" height="0"><filter id="nz" x="0" y="0" width="100%" height="100%"><feTurbulence type="fractalNoise" baseFrequency="0.6" numOctaves="2" seed="3" result="n"/><feColorMatrix type="matrix" values="0 0 0 0 1  0 0 0 0 1  0 0 0 0 1  1.7 0 0 0 -0.42"/></filter></svg>
<div class="a" style="left:311px;top:398px;width:640px;height:267px;background:#e2e2e2"></div>
<div class="a" style="left:311px;top:398px;width:640px;height:267px;filter:url(#nz);opacity:1"></div>
<div class="t" style="left:603px;top:425.5px;font-size:11px;font-weight:bold;color:#222">我们的优势</div>
<div class="t" style="left:609px;top:442px;font-size:5px;color:#777">OUR ADVANTAGES</div>
<div class="a" style="left:397px;top:481px;width:235px;height:143px;background:#000;overflow:hidden">
<div class="a" style="left:0;top:14px;width:235px;height:106px;background:radial-gradient(ellipse 62px 70px at 96px 46px,#fffbe9 0,#fbe9c4 40%,#f3dcc6 75%,#ecd6ca 100%)"></div>
<svg style="left:0;top:14px" width="235" height="106" viewBox="0 0 235 106">
<defs><linearGradient id="gnd" x1="0" y1="0" x2="0" y2="1"><stop offset="0" stop-color="#2a2622"/><stop offset="1" stop-color="#37322f"/></linearGradient>
<linearGradient id="leg" x1="0" y1="0" x2="1" y2="0"><stop offset="0" stop-color="#241e14"/><stop offset=".55" stop-color="#352c18"/><stop offset=".9" stop-color="#4a3c1c"/><stop offset="1" stop-color="#5e4c20"/></linearGradient>
<linearGradient id="leg2" x1="0" y1="0" x2="1" y2="0"><stop offset="0" stop-color="#5a4818"/><stop offset=".3" stop-color="#3a2e12"/><stop offset="1" stop-color="#2c2412"/></linearGradient>
<filter id="vb" x="-5%" y="-5%" width="110%" height="110%"><feGaussianBlur stdDeviation="0.7"/></filter></defs>
<g filter="url(#vb)">
<path d="M57 56 L100 57 L172 59 L203 61.500 L213 57.500 L235 60 L235 106 L0 106 L0 56 Z" fill="url(#gnd)"/>
<path d="M60 70 L110 66 L108 80 L66 84 Z" fill="#4a3c1c" opacity=".55"/>
<path d="M0 0 L76.300 0 L72.400 12.800 L69.900 25.600 L60.900 38.400 L57.100 48.600 L56.600 64 L60.100 82 L64.700 106 L0 106 Z" fill="url(#leg)"/>
<path d="M4 0 L20 0 L19 6 L5 9 Z" fill="#8a785a" opacity=".45"/>
<path d="M118.500 0 L155.600 0 L154.800 20.500 L146.600 44.800 L149.700 52.500 L146.600 57.600 L140.200 59 L138.900 69 L144.100 84.400 L146.100 92 L136.400 96 L109.500 96 L111.300 84.400 L113.400 69 L115.900 56.300 L112.800 51.200 L118.500 43.500 L118 20.500 Z" fill="url(#leg2)"/>
<path d="M112 84 L143 80 L146.500 91 L137 96 L109.500 96 Z" fill="#6a6058" opacity=".8"/>
<path d="M150 92 L200 88 L230 94 L180 99 Z" fill="#5a544e" opacity=".35"/>
<path d="M64 106 L93 54 L72 106 Z" fill="#d8b040" opacity=".3"/>
<path d="M30 106 L90 50 L40 106 Z" fill="#b89030" opacity=".15"/>
</g></svg>
<div class="a" style="left:0;top:120px;width:235px;height:23px;background:#020202"></div>
<div class="a" style="left:5px;top:135px;width:226px;height:1px;background:#6a6428"></div>
<div class="a" style="left:7px;top:126px;width:0;height:0;border-top:2px solid transparent;border-bottom:2px solid transparent;border-left:3px solid #eee"></div>
<div class="t" style="left:14px;top:126px;font-size:4px;color:#ddd">0:00 / 4:23</div>
<div class="a" style="left:197px;top:126px;width:4px;height:4px;background:#ddd;border-radius:1px"></div>
<div class="a" style="left:211px;top:126px;width:4px;height:4px;border:1px solid #ddd"></div>
<div class="a" style="left:227px;top:126px;width:1px;height:4px;background:#ddd"></div>
</div>
<div class="t" style="left:666px;top:473px;font-size:9.8px;font-weight:bold;color:#222">专注塑料打包带10余载</div>
<div class="t" style="left:666px;top:491px;font-size:8.6px;color:#444;letter-spacing:-.03px">包装耗材一站式购物/品种齐全/服务多样/源头工厂</div>
<svg style="left:664px;top:514px" width="23" height="23" viewBox="0 0 23 23"><path d="M1 1v17M21 1v17" stroke="#5b86f2" stroke-width="1.8" fill="none"/><path d="M6 9.5h10" stroke="#5b86f2" stroke-width="2" fill="none"/><path d="M8.500 5.500L4 9.500l4.500 4zM13.500 5.500l4.500 4-4.500 4z" fill="#5b86f2"/></svg>
<div class="a" style="left:671px;top:545px;width:8px;height:1px;background:#5b86f2"></div>
<div class="t" style="left:664.5px;top:558.0px;font-size:7px;color:#444">抗拉力强</div>
<svg style="left:745px;top:514px" width="23" height="23" viewBox="0 0 23 23"><path transform="translate(0 2)" d="M4 12 L10 7 M3 15c-2 2 1 5 3 3l4-4M12 4l3-3c2-2 5 1 3 3l-4 4M13 11l3 2M12 13l1 3M5 5l2 2M8 3l.5 2.5M3 8l2.500 .5" stroke="#5b86f2" stroke-width="1.1" fill="none" stroke-linecap="round"/></svg>
<div class="a" style="left:751px;top:545px;width:8px;height:1px;background:#5b86f2"></div>
<div class="t" style="left:740.0px;top:558.0px;font-size:7px;color:#444">不易断裂</div>
<svg style="left:828px;top:514px" width="23" height="23" viewBox="0 0 23 23"><path d="M1 10h4v10H1zM5 11c3-1 4-5 4.500-9.500 .3-2 3.500-1.500 3.500 1.500 0 2.500-.8 4.500-1 6.500h7.500c2 0 2.500 1.500 2 3l-2 6c-.5 1.300-1.500 1.500-3 1.500H5z" stroke="#5b86f2" stroke-width="1.2" fill="none" stroke-linejoin="round"/></svg>
<div class="a" style="left:836px;top:545px;width:8px;height:1px;background:#5b86f2"></div>
<div class="t" style="left:824.0px;top:558.0px;font-size:7px;color:#444">高柔韧性</div>
<svg style="left:664px;top:585px" width="23" height="23" viewBox="0 0 23 23"><path d="M2 4l3-3M2 11L12 1M2 18L19 1M5 22L22 5M12 22l10-10M19 22l3-3" stroke="#5b86f2" stroke-width="2.2" fill="none"/></svg>
<div class="a" style="left:671px;top:618px;width:8px;height:1px;background:#5b86f2"></div>
<div class="t" style="left:664.5px;top:625.5px;font-size:7px;color:#444">纹理清晰</div>
<svg style="left:745px;top:585px" width="23" height="23" viewBox="0 0 23 23"><path d="M12 1C5 1 1 6 1 11c0 4 3 7 6 7 2 0 2.500 1 3 3s3 2 4 0c1-2 1-4 3-5 4-1 6-3 6-6 0-5-5-9-11-9z" stroke="#5b86f2" stroke-width="1.2" fill="none"/><circle cx="6" cy="9" r="1" fill="#5b86f2"/><circle cx="9" cy="5.5" r="1" fill="#5b86f2"/><circle cx="14" cy="5" r="1" fill="#5b86f2"/><circle cx="18" cy="8" r="1" fill="#5b86f2"/><circle cx="5" cy="13" r="1" fill="#5b86f2"/></svg>
<div class="a" style="left:751px;top:618px;width:8px;height:1px;background:#5b86f2"></div>
<div class="t" style="left:740.0px;top:625.5px;font-size:7px;color:#444">色泽亮丽</div>
<svg style="left:828px;top:585px" width="23" height="23" viewBox="0 0 23 23"><path d="M1 8l4.500-6 4.500 6v14H1zM1 18h9M13 2h9v20h-9zM17.500 2v20M17.500 6h3M17.500 10h3M17.500 14h3M17.500 18h3" stroke="#5b86f2" stroke-width="1.3" fill="none" stroke-linejoin="round"/></svg>
<div class="a" style="left:836px;top:618px;width:8px;height:1px;background:#5b86f2"></div>
<div class="t" style="left:824.0px;top:625.5px;font-size:7px;color:#444">支持定制</div>
<div class="a" style="left:311px;top:665px;width:640px;height:200px;overflow:hidden;background:linear-gradient(180deg,#688ab2 0,#577fab 35%,#4873a3 65%,#3d6799 100%)">
<svg style="left:0;top:0" width="640" height="200" viewBox="0 0 640 200">
<defs>
<pattern id="grid" width="4.200" height="3.100" patternUnits="userSpaceOnUse" patternTransform="rotate(13) skewX(33)"><rect width="4.200" height="3.100" fill="#90a9c8"/><rect x="0.700" y="0.600" width="2.900" height="2" fill="#47678f"/></pattern>
<pattern id="grid3" width="3.400" height="4" patternUnits="userSpaceOnUse" patternTransform="rotate(30) skewX(40)"><rect width="3.400" height="4" fill="#6a88ae"/><rect x="0.600" y="0.700" width="2.300" height="2.600" fill="#37577f"/></pattern>
<pattern id="grid2" width="2.600" height="3.600" patternUnits="userSpaceOnUse" patternTransform="rotate(-10) skewX(12)"><rect width="2.600" height="3.600" fill="#5f80aa"/><rect x="0.500" y="0.600" width="1.600" height="2.400" fill="#3c5d88"/></pattern>
<linearGradient id="bfade" x1="0" y1="0" x2="1" y2="1"><stop offset="0" stop-color="#9db6d6" stop-opacity=".35"/><stop offset=".5" stop-color="#5a7aa4" stop-opacity=".1"/><stop offset="1" stop-color="#16305a" stop-opacity=".4"/></linearGradient>
<linearGradient id="skyr" x1="0" y1="0" x2="1" y2="0"><stop offset="0" stop-color="#3c6392" stop-opacity="0"/><stop offset=".6" stop-color="#3b618f" stop-opacity=".85"/><stop offset="1" stop-color="#3a5f8c" stop-opacity="1"/></linearGradient>
<filter id="bb" x="0" y="0" width="100%" height="100%"><feGaussianBlur stdDeviation="0.350"/></filter>
</defs>
<rect x="200" y="0" width="440" height="200" fill="url(#skyr)"/>
<path d="M0 0 L250 0 L120 200 L0 200 Z" fill="#fff" opacity=".025"/>
<path d="M200 0 L260 0 L330 120 L300 140 Z" fill="#fff" opacity=".04"/>
<g filter="url(#bb)">
<path d="M323 17 L517 53 L640 118 L640 200 L381 200 Z" fill="url(#grid)"/>
<path d="M517 53 L640 118 L640 200 L560 200 Z" fill="url(#grid3)" opacity=".75"/>
<path d="M323 17 L517 53 L640 118 L640 200 L381 200 Z" fill="url(#bfade)"/>
<path d="M323 17 L381 200 L300 200 L302 146 L308 70 Z" fill="url(#grid2)"/>
<path d="M323 17 L381 200 L300 200 L302 146 L308 70 Z" fill="#4a6f9f" opacity=".35"/>
<path d="M321.500 17 L326 17 L386 200 L377 200 Z" fill="#b9cae0" opacity=".9"/>
<path d="M323 17 L517 53 L640 118" fill="none" stroke="#2f4f7a" stroke-width="1" opacity=".6"/>
</g>
</svg>
</div>
<div class="t" style="left:574px;top:706px;font-size:10px;font-weight:bold;color:#fff">临沂市亿利包装有限公司</div>
<div class="t" style="left:437px;top:740.6px;font-size:6.3px;color:#f4f7fb;letter-spacing:-.04px">自 2014 年成立以来，临沂市亿利包装有限公司始终专注包装领域。在行业中稳健发展，持续拓展版图。公司位于临沂市河东区八湖镇，公司占地面积</div>
<div class="t" style="left:417px;top:752.8px;font-size:6.3px;color:#f4f7fb;letter-spacing:-.04px">56,000 平方米，400 余位专业员工凭借丰富经验与创新精神，全力满足客户包装需求。业务涵盖生产、销售与设计全链条。生产上，涵盖塑料打包带、高低压</div>
<div class="t" style="left:417px;top:765.0px;font-size:6.3px;color:#f4f7fb;letter-spacing:-.04px">塑料包装袋、地膜、农膜等各类内膜袋，以及全（半）自动打包带、塑钢带、彩色带等多元产品；销售涵盖自动包装机械材料与设备，提供一站式采购服务。</div>
<div class="a" style="left:610px;top:782px;width:18px;height:18px;border-radius:9px;background:#2e6ba5"></div>
<div class="t" style="left:619px;top:787px;font-size:7px;color:#2a5d92">探索更多 ›</div>
<div class="a" style="left:397px;top:812px;width:467px;height:53px;background:#e2e2e2"></div>
<div class="a" style="left:397px;top:812px;width:467px;height:53px;filter:url(#nz);opacity:1"></div>
<div class="t" style="left:413.0px;top:822px;font-size:19.5px;color:#1b3c8e;-webkit-text-stroke:.35px #1b3c8e;transform:scaleX(.97);transform-origin:0 0">6</div>
<div class="t" style="left:433.5px;top:832px;font-size:5px;color:#1b3c8e;font-weight:bold">万+</div>
<div class="t" style="left:407.5px;top:846px;font-size:5px;color:#555">占地56000平方米</div>
<div class="t" style="left:495.5px;top:822px;font-size:19.5px;color:#1b3c8e;-webkit-text-stroke:.35px #1b3c8e;transform:scaleX(.97);transform-origin:0 0">2014</div>
<div class="t" style="left:548.0px;top:832px;font-size:5px;color:#1b3c8e;font-weight:bold">年</div>
<div class="t" style="left:508.0px;top:846px;font-size:5px;color:#555">正式成立</div>
<div class="t" style="left:621.0px;top:822px;font-size:19.5px;color:#1b3c8e;-webkit-text-stroke:.35px #1b3c8e;transform:scaleX(.97);transform-origin:0 0">20</div>
<div class="t" style="left:658.0px;top:832px;font-size:5px;color:#1b3c8e;font-weight:bold">+</div>
<div class="t" style="left:622.0px;top:846px;font-size:5px;color:#555">生产线及设备</div>
<div class="t" style="left:715.0px;top:822px;font-size:19.5px;color:#1b3c8e;-webkit-text-stroke:.35px #1b3c8e;transform:scaleX(.97);transform-origin:0 0">2000</div>
<div class="t" style="left:765.0px;top:832px;font-size:5px;color:#1b3c8e;font-weight:bold">万+</div>
<div class="t" style="left:723.0px;top:846px;font-size:5px;color:#555">年产2000万吨</div>
<div class="t" style="left:814.5px;top:822px;font-size:19.5px;color:#1b3c8e;-webkit-text-stroke:.35px #1b3c8e;transform:scaleX(.97);transform-origin:0 0">400</div>
<div class="t" style="left:854.5px;top:832px;font-size:5px;color:#1b3c8e;font-weight:bold">+</div>
<div class="t" style="left:822.0px;top:846px;font-size:5px;color:#555">专业技术人才</div>
<div class="t" style="left:608px;top:897px;font-size:11px;color:#333">车间厂房</div>
<div class="t" style="left:612px;top:913.5px;font-size:5px;color:#8a8a8a">MACHINE TOOLS</div>
<div class="a" style="left:397px;top:936px;width:467px;height:2px;background:linear-gradient(90deg,#3a3630 0 24%,#1d1d22 24% 25%,#2b4a78 25% 50%,#222 50% 51%,#4a463c 51% 75%,#222 75% 76%,#3c3a36 76%)"></div>
</div></div>
<div class="a" style="left:0;top:0;width:1373px;height:938px;overflow:hidden">
<div class="hg" style="top:143px"></div>
<div class="hg" style="top:175px"></div>
<div class="hg" style="top:223px"></div>
<div class="hg" style="top:303px"></div>
<div class="hg" style="top:389px"></div>
<div class="hg" style="top:397px"></div>
<div class="hg" style="top:421px"></div>
<div class="hg" style="top:740px"></div>
<div class="hg" style="top:811px"></div>
<div class="hg" style="top:866px"></div>
<div class="hg" style="top:893px"></div>
<div class="vg" style="left:396px;top:63px;height:875px"></div>
<div class="vg" style="left:416px;top:63px;height:875px"></div>
<div class="vg" style="left:457px;top:63px;height:875px"></div>
<div class="vg" style="left:468px;top:63px;height:875px"></div>
<div class="vg" style="left:492px;top:63px;height:875px"></div>
<div class="vg" style="left:507px;top:63px;height:875px"></div>
<div class="vg" style="left:515px;top:63px;height:875px"></div>
<div class="vg" style="left:525px;top:63px;height:875px"></div>
<div class="vg" style="left:531px;top:63px;height:875px"></div>
<div class="vg" style="left:571px;top:63px;height:875px"></div>
<div class="vg" style="left:615px;top:63px;height:875px"></div>
<div class="vg" style="left:627px;top:63px;height:875px"></div>
<div class="vg" style="left:630px;top:63px;height:875px"></div>
<div class="vg" style="left:634px;top:63px;height:875px"></div>
<div class="vg" style="left:709px;top:63px;height:875px"></div>
<div class="vg" style="left:735px;top:63px;height:875px"></div>
<div class="vg" style="left:742px;top:63px;height:875px"></div>
<div class="vg" style="left:745px;top:63px;height:875px"></div>
<div class="vg" style="left:750px;top:63px;height:875px"></div>
<div class="vg" style="left:786px;top:63px;height:875px"></div>
<div class="vg" style="left:844px;top:63px;height:875px"></div>
<div class="vg" style="left:863px;top:63px;height:875px"></div>
</div>
<div class="a" id="toolbox" style="left:0;top:108px;width:36px;height:662px;background:#535353;border-right:1px solid #303030;border-top-right-radius:3px;border-bottom-right-radius:2px;overflow:hidden">
<div class="a" style="left:0;top:0;width:35px;height:13px;background:#3c3c3c;border-bottom:1px solid #2c2c2c"></div>
<svg style="left:6px;top:3px" width="26" height="8" viewBox="0 0 26 8"><path d="M0 0.500l3.500 3L0 6.500zM4.500 0.500l3.500 3-3.500 3z" fill="#dcdcdc"/><path d="M18 1l5 5M23 1l-5 5" stroke="#e4e4e4" stroke-width="1.5"/></svg>
<div class="a" style="left:7px;top:17px;width:20px;height:3px;background:repeating-linear-gradient(90deg,#3a3a3a 0 1px,#5e5e5e 1px 2px)"></div>
<svg style="left:6px;top:30px" width="20" height="20" viewBox="0 0 20 20"><path d="M3 3l9 6.500-9 6z" fill="#c8c8c8"/><path d="M15 7v8M11 11h8M15 7l-1.500 1.800h3zM15 15l-1.500-1.800h3zM11 11l1.800-1.500v3zM19 11l-1.800-1.500v3z" stroke="#c8c8c8" stroke-width="1" fill="#c8c8c8"/></svg>
<svg style="left:6px;top:56px" width="20" height="20" viewBox="0 0 20 20"><rect x="3.500" y="4.500" width="13" height="11" fill="none" stroke="#c8c8c8" stroke-width="1.300" stroke-dasharray="2.500 1.500"/></svg>
<div class="a" style="left:26px;top:73px;width:0;height:0;border-left:3px solid transparent;border-bottom:3px solid #d8d8d8"></div>
<svg style="left:6px;top:82px" width="20" height="20" viewBox="0 0 20 20"><path d="M5 13c-4-2-3-7 3-8s10 1 9 4-6 5-10 4c-1.500 0-2 2-1 3s-1 3 0 3" fill="none" stroke="#c8c8c8" stroke-width="1.400"/></svg>
<div class="a" style="left:26px;top:99px;width:0;height:0;border-left:3px solid transparent;border-bottom:3px solid #d8d8d8"></div>
<svg style="left:6px;top:108px" width="20" height="20" viewBox="0 0 20 20"><ellipse cx="7" cy="12" rx="4.500" ry="5" fill="none" stroke="#c8c8c8" stroke-width="1" stroke-dasharray="1.500 1.300"/><path d="M8 14c2 1 4 0 5-2l5-8-1.500-1-6 7c-2 .5-3 2-2.500 4z" fill="#c8c8c8"/></svg>
<div class="a" style="left:26px;top:125px;width:0;height:0;border-left:3px solid transparent;border-bottom:3px solid #d8d8d8"></div>
<svg style="left:6px;top:134px" width="20" height="20" viewBox="0 0 20 20"><path d="M5.500 2v13h13M2 5.500h13v13" fill="none" stroke="#c8c8c8" stroke-width="2"/><path d="M17 3L8 12" stroke="#c8c8c8" stroke-width="1"/></svg>
<div class="a" style="left:26px;top:151px;width:0;height:0;border-left:3px solid transparent;border-bottom:3px solid #d8d8d8"></div>
<svg style="left:6px;top:160px" width="20" height="20" viewBox="0 0 20 20"><path d="M3 17l1-3 7-7 2 2-7 7z" fill="none" stroke="#c8c8c8" stroke-width="1.200"/><path d="M10 5l5 5M11.500 6.500l3-3c1.500-1.500 3.500.5 2 2l-3 3z" stroke="#c8c8c8" stroke-width="1.600" fill="#c8c8c8"/></svg>
<div class="a" style="left:26px;top:177px;width:0;height:0;border-left:3px solid transparent;border-bottom:3px solid #d8d8d8"></div>
<svg style="left:6px;top:189px" width="20" height="20" viewBox="0 0 20 20"><ellipse cx="6" cy="8" rx="4" ry="5" fill="none" stroke="#c8c8c8" stroke-width="1" stroke-dasharray="1.500 1.300"/><rect x="4" y="8" width="15" height="7" rx="3.500" transform="rotate(-38 11.500 11.500)" fill="#c8c8c8"/><rect x="9.500" y="9.500" width="4" height="4" transform="rotate(-38 11.500 11.500)" fill="#777"/></svg>
<div class="a" style="left:26px;top:206px;width:0;height:0;border-left:3px solid transparent;border-bottom:3px solid #d8d8d8"></div>
<svg style="left:6px;top:215px" width="20" height="20" viewBox="0 0 20 20"><path d="M17.500 1.500l1.300 1.200-7.300 10.300-2.500-2zM8.300 11.500l2.700 2.200c-.8 3.300-4.800 4.300-9 3.500 2.800-.7 3.300-3.600 6.300-5.700z" fill="#c8c8c8"/></svg>
<div class="a" style="left:26px;top:232px;width:0;height:0;border-left:3px solid transparent;border-bottom:3px solid #d8d8d8"></div>
<svg style="left:6px;top:242px" width="20" height="20" viewBox="0 0 20 20"><circle cx="10" cy="5" r="2.800" fill="#c8c8c8"/><path d="M8.600 6.500h2.800l.8 4.500H7.800zM3 11h14v3.200H3z" fill="#c8c8c8"/><path d="M3 16.300h14" stroke="#c8c8c8" stroke-width="1.200"/></svg>
<div class="a" style="left:26px;top:259px;width:0;height:0;border-left:3px solid transparent;border-bottom:3px solid #d8d8d8"></div>
<svg style="left:6px;top:268px" width="20" height="20" viewBox="0 0 20 20"><path d="M15 3l1.500 1.300-7 8.700-2-1.500zM7 12l2 1.800c-1 3-3 3.500-6 3.200 2-1 2-3 4-5z" fill="#c8c8c8"/><path d="M3 7c1-3 4-4 7-3M10 4L7.500 2.500M10 4L8 6" stroke="#c8c8c8" stroke-width="1.200" fill="none"/><path d="M13 11c3 1 3 5 0 7" stroke="#c8c8c8" stroke-width="1" fill="none" stroke-dasharray="1.500 1.200"/></svg>
<div class="a" style="left:26px;top:285px;width:0;height:0;border-left:3px solid transparent;border-bottom:3px solid #d8d8d8"></div>
<svg style="left:6px;top:294px" width="20" height="20" viewBox="0 0 20 20"><path d="M9 4h8l-6 9H3zM3 13h8v3.500H3zM11 13l6-9v3.500l-6 9z" fill="#c8c8c8" stroke="#444" stroke-width=".6"/></svg>
<div class="a" style="left:26px;top:311px;width:0;height:0;border-left:3px solid transparent;border-bottom:3px solid #d8d8d8"></div>
<svg style="left:6px;top:319px" width="20" height="20" viewBox="0 0 20 20"><defs><linearGradient id="tg"><stop offset="0" stop-color="#d8d8d8"/><stop offset="1" stop-color="#555"/></linearGradient></defs><rect x="3" y="5" width="15" height="11" fill="url(#tg)" stroke="#c8c8c8" stroke-width="1"/></svg>
<div class="a" style="left:26px;top:336px;width:0;height:0;border-left:3px solid transparent;border-bottom:3px solid #d8d8d8"></div>
<svg style="left:6px;top:346px" width="20" height="20" viewBox="0 0 20 20"><path d="M10 3c3 5 5 7 5 10a5 5 0 0 1-10 0c0-3 2-5 5-10z" fill="#c8c8c8"/></svg>
<div class="a" style="left:26px;top:363px;width:0;height:0;border-left:3px solid transparent;border-bottom:3px solid #d8d8d8"></div>
<svg style="left:6px;top:372px" width="20" height="20" viewBox="0 0 20 20"><circle cx="8" cy="8" r="4.500" fill="#c8c8c8"/><path d="M11.500 11.500L17 17" stroke="#c8c8c8" stroke-width="2.200" stroke-linecap="round"/></svg>
<div class="a" style="left:26px;top:389px;width:0;height:0;border-left:3px solid transparent;border-bottom:3px solid #d8d8d8"></div>
<svg style="left:6px;top:401px" width="20" height="20" viewBox="0 0 20 20"><g transform="translate(-2.500 -1.500) scale(1.180)"><path d="M15 2l3 3-2 2-3-3zM12.500 4.500l3 3-3.500 7.500-8 2 2-8zM4 17l5-5" fill="#c8c8c8" stroke="#444" stroke-width=".7"/><circle cx="10" cy="10" r="1.200" fill="#444"/></g></svg>
<div class="a" style="left:26px;top:418px;width:0;height:0;border-left:3px solid transparent;border-bottom:3px solid #d8d8d8"></div>
<div class="t" style="left:9.5px;top:426px;font-family:'Liberation Serif',serif;font-size:21px;color:#c8c8c8">T</div>
<div class="a" style="left:26px;top:444px;width:0;height:0;border-left:3px solid transparent;border-bottom:3px solid #d8d8d8"></div>
<svg style="left:6px;top:452px" width="20" height="20" viewBox="0 0 20 20"><path d="M6 3v13l3.500-3 2.500 5 2-1-2.500-5H16z" fill="#222" stroke="#c8c8c8" stroke-width="1.200"/></svg>
<div class="a" style="left:26px;top:469px;width:0;height:0;border-left:3px solid transparent;border-bottom:3px solid #d8d8d8"></div>
<svg style="left:6px;top:479px" width="20" height="20" viewBox="0 0 20 20"><rect x="3.500" y="5.500" width="14" height="10" fill="#8a8a8a" stroke="#c8c8c8" stroke-width="1.200"/></svg>
<div class="a" style="left:26px;top:496px;width:0;height:0;border-left:3px solid transparent;border-bottom:3px solid #d8d8d8"></div>
<svg style="left:6px;top:508px" width="20" height="20" viewBox="0 0 20 20"><path d="M6.500 11.500L5.300 5.800c-.4-1.600 1.500-2 1.900-.5L8.200 9 8 3.500c0-1.600 2-1.600 2.100 0L10.400 9l.9-5c.3-1.500 2.200-1.200 2 .4L12.700 10l1.500-3.300c.7-1.400 2.400-.6 1.800.9L13.500 15c-.4 1.300-.8 2.500-1.200 3H7c-.5-1.500-2.500-3.300-4.200-5.300-1-1.200.4-2.400 1.500-1.500z" fill="#c8c8c8"/></svg>
<div class="a" style="left:26px;top:525px;width:0;height:0;border-left:3px solid transparent;border-bottom:3px solid #d8d8d8"></div>
<div class="a" style="left:2px;top:533px;width:30px;height:22px;background:#383838;border:1px solid #2a2a2a;border-radius:3px"></div>
<svg style="left:6px;top:534px" width="20" height="20" viewBox="0 0 20 20"><circle cx="8" cy="8" r="4.800" fill="#999" stroke="#c8c8c8" stroke-width="1.500"/><path d="M12 12L17 17" stroke="#c8c8c8" stroke-width="2.600" stroke-linecap="round"/></svg>
<div class="a" style="left:3px;top:186px;width:28px;height:1px;background:#3e3e3e"></div><div class="a" style="left:3px;top:187px;width:28px;height:1px;background:#626262"></div>
<div class="a" style="left:3px;top:396px;width:28px;height:1px;background:#3e3e3e"></div><div class="a" style="left:3px;top:397px;width:28px;height:1px;background:#626262"></div>
<div class="a" style="left:3px;top:503px;width:28px;height:1px;background:#3e3e3e"></div><div class="a" style="left:3px;top:504px;width:28px;height:1px;background:#626262"></div>
<svg style="left:1px;top:559px" width="32" height="12" viewBox="0 0 32 12"><rect x="4" y="4" width="7" height="7" fill="#fff" stroke="#222" stroke-width="1"/><rect x="1" y="1" width="7" height="7" fill="#111" stroke="#ddd" stroke-width="1"/><path d="M19 4c4-3 8-1 8 4M19 4l3-2.500M19 4l3 2M27 8l-2-2.500M27 8l2-2.500" stroke="#d8d8d8" stroke-width="1.200" fill="none"/></svg>
<div class="a" style="left:11px;top:585px;width:20px;height:20px;background:#fff;border:1px solid #222;box-shadow:0 0 0 1px #bbb inset"></div>
<div class="a" style="left:1px;top:576px;width:20px;height:19px;background:#000;border:1px solid #e8e8e8;box-shadow:0 0 0 1px #222"></div>
<svg style="left:7px;top:610px" width="20" height="18" viewBox="0 0 20 18"><rect x="1.500" y="2.500" width="16" height="12" fill="none" stroke="#ccc" stroke-width="1.200"/><circle cx="9.500" cy="8.500" r="3.500" fill="none" stroke="#ccc" stroke-width="1" stroke-dasharray="1.300 1.200"/></svg>
<svg style="left:7px;top:637px" width="20" height="18" viewBox="0 0 20 18"><rect x="5.500" y="2.500" width="12" height="9" fill="#666" stroke="#ccc" stroke-width="1.200"/><rect x="1.500" y="6.500" width="12" height="9" fill="#555" stroke="#ccc" stroke-width="1.200"/></svg>
<div class="a" style="left:26px;top:654px;width:0;height:0;border-left:3px solid transparent;border-bottom:3px solid #d8d8d8"></div>
</div>
<div class="a" style="left:1373px;top:63px;width:16px;height:875px;background:linear-gradient(90deg,#2e2e2e,#3d3d3d 30%,#3d3d3d 70%,#333)"></div>
<div class="a" style="left:1378px;top:70px;width:0;height:0;border-left:3px solid transparent;border-right:3px solid transparent;border-bottom:3px solid #e0e0e0"></div>
<div class="a" style="left:1375px;top:332px;width:12px;height:300px;border-radius:3px;background:linear-gradient(90deg,#555,#8a8a8a 50%,#6a6a6a)"></div>
<div class="a" style="left:1389px;top:44px;width:3px;height:894px;background:#262626"></div>
<div class="a" id="dock" style="left:1392px;top:44px;width:185px;height:894px;background:#535353;overflow:hidden">
<div class="a" style="left:0;top:0;width:185px;height:12px;background:#3b3b3b;border-bottom:1px solid #2c2c2c"></div>
<div class="a" style="left:0;top:12px;width:185px;height:18px;background:#424242;border-bottom:1px solid #2f2f2f"></div>
<div class="a" style="left:0px;top:12px;width:51px;height:17px;background:#535353;border-right:1px solid #333;border-top:1px solid #666;color:#e4e4e4;line-height:16px;padding-left:8px;white-space:nowrap">仿制源</div>
<div class="a" style="left:0;top:30px;width:185px;height:4px;background:#353535"></div>
<div class="a" style="left:0;top:33px;width:185px;height:18px;background:#424242;border-bottom:1px solid #2f2f2f"></div>
<div class="a" style="left:0px;top:33px;width:62px;height:17px;background:#535353;border-right:1px solid #333;border-top:1px solid #666;color:#e4e4e4;line-height:16px;padding-left:8px;white-space:nowrap">段落样式</div>
<div class="a" style="left:62px;top:33px;width:62px;height:17px;background:#474747;border-right:1px solid #333;border-top:1px solid #666;color:#9c9c9c;line-height:16px;padding-left:8px;white-space:nowrap">字符样式</div>
<div class="a" style="left:0;top:51px;width:185px;height:4px;background:#353535"></div>
<div class="a" style="left:0;top:54px;width:185px;height:18px;background:#424242"></div>
<div class="a" style="left:0px;top:54px;width:62px;height:17px;background:#535353;border-right:1px solid #333;border-top:1px solid #666;color:#e4e4e4;line-height:16px;padding-left:8px;white-space:nowrap">工具预设</div>
<div class="a" style="left:0;top:72.5px;width:185px;height:24px;border-bottom:1px solid #454545;border-top:1px solid #5c5c5c"></div>
<svg style="left:8px;top:75.5px" width="18" height="18" viewBox="0 0 18 18"><rect x="1" y="6" width="16" height="6.500" rx="3.200" transform="rotate(-38 9 9)" fill="#a8a8a8"/><rect x="7" y="7" width="4" height="4" transform="rotate(-38 9 9)" fill="#777"/></svg>
<div class="t" style="left:30px;top:78.5px;color:#ececec;">修复画笔 21 像素</div>
<div class="a" style="left:0;top:96.5px;width:185px;height:24px;border-bottom:1px solid #454545;border-top:1px solid #5c5c5c"></div>
<svg style="left:8px;top:99.5px" width="18" height="18" viewBox="0 0 18 18"><path d="M1 3l4 11 10-3M5 14l-1.500 3" fill="none" stroke="#c4c4c4" stroke-width="1.200"/><path d="M7 3h5c4 0 4 6 0 6H8V7h4c1.500 0 1.500-2 0-2H7z" fill="none" stroke="#c4c4c4" stroke-width="1.100"/></svg>
<div class="t" style="left:30px;top:102.5px;color:#ececec;">磁性套索 24 像素</div>
<div class="a" style="left:0;top:120.5px;width:185px;height:24px;border-bottom:1px solid #454545;border-top:1px solid #5c5c5c"></div>
<div class="a" style="left:0;top:144.5px;width:185px;height:24px;border-bottom:1px solid #454545;border-top:1px solid #5c5c5c"></div>
<div class="a" style="left:0;top:168.5px;width:185px;height:24px;border-bottom:1px solid #454545;border-top:1px solid #5c5c5c"></div>
<div class="a" style="left:0;top:192.5px;width:185px;height:24px;border-bottom:1px solid #454545;border-top:1px solid #5c5c5c"></div>
<div class="a" style="left:0;top:216.5px;width:185px;height:24px;border-bottom:1px solid #454545;border-top:1px solid #5c5c5c"></div>
<div class="a" style="left:0;top:240.5px;width:185px;height:24px;border-bottom:1px solid #454545;border-top:1px solid #5c5c5c"></div>
<div class="t" style="left:30px;top:246.5px;color:#ececec;max-width:100px;overflow:hidden">填充 气泡图案</div>
<div class="a" style="left:0;top:264.5px;width:185px;height:24px;border-bottom:1px solid #454545;border-top:1px solid #5c5c5c"></div>
<svg style="left:5px;top:266.0px" width="20" height="20" viewBox="0 0 18 18"><path d="M13 1l3.500 3.500-2 2-3.500-3.500zM10.500 3.500l3.500 3.500-3.500 7-8.500 2.500 2.500-8.500zM2 16.500l5-5" fill="#bdbdbd" stroke="#444" stroke-width=".6"/><circle cx="8" cy="10" r="1.100" fill="#333"/></svg>
<div class="t" style="left:30px;top:270.5px;color:#ececec;">花生虚线</div>
<div class="a" style="left:0;top:288.5px;width:185px;height:24px;border-bottom:1px solid #454545;border-top:1px solid #5c5c5c"></div>
<div class="t" style="left:9px;top:290.5px;font-family:'Liberation Serif',serif;font-size:19px;color:#c0c0c0">T</div>
<div class="t" style="left:30px;top:294.5px;color:#ececec;">横排文字工具，Myriad Pro 字规 24 点</div>
<div class="a" style="left:0;top:312.5px;width:185px;height:24px;border-bottom:1px solid #454545;border-top:1px solid #5c5c5c"></div>
<div class="t" style="left:4px;top:314.5px;font-family:'Liberation Serif',serif;font-size:19px;color:#c0c0c0"><span style="font-size:13px;vertical-align:2px">↓</span>T</div>
<div class="t" style="left:30px;top:318.5px;color:#ececec;">竖排文字工具，Myriad Pro 字规 24 点</div>
<div class="a" style="left:0;top:336.5px;width:185px;height:24px;border-bottom:1px solid #454545;border-top:1px solid #5c5c5c"></div>
<div class="a" style="left:0;top:360.5px;width:185px;height:24px;border-bottom:1px solid #454545;border-top:1px solid #5c5c5c"></div>
<div class="a" style="left:0;top:384.5px;width:185px;height:24px;border-bottom:1px solid #454545;border-top:1px solid #5c5c5c"></div>
<div class="a" style="left:0;top:408.5px;width:185px;height:24px;border-bottom:1px solid #454545;border-top:1px solid #5c5c5c"></div>
<div class="a" style="left:0;top:432.5px;width:185px;height:24px;border-bottom:1px solid #454545;border-top:1px solid #5c5c5c"></div>
<div class="a" style="left:0;top:456.5px;width:185px;height:24px;border-bottom:1px solid #454545;border-top:1px solid #5c5c5c"></div>
<div class="a" style="left:0;top:480.5px;width:185px;height:24px;border-bottom:1px solid #454545;border-top:1px solid #5c5c5c"></div>
<div class="a" style="left:0;top:504.5px;width:185px;height:24px;border-bottom:1px solid #454545;border-top:1px solid #5c5c5c"></div>
<div class="a" style="left:0;top:528.5px;width:185px;height:24px;border-bottom:1px solid #454545;border-top:1px solid #5c5c5c"></div>
<div class="t" style="left:138px;top:534.5px;color:#ececec">4 像素</div>
<div class="a" style="left:0;top:552.5px;width:185px;height:24px;border-bottom:1px solid #454545;border-top:1px solid #5c5c5c"></div>
<div class="a" style="left:0;top:576.5px;width:185px;height:24px;border-bottom:1px solid #454545;border-top:1px solid #5c5c5c"></div>
<div class="a" style="left:0;top:600.5px;width:185px;height:24px;border-bottom:1px solid #454545;border-top:1px solid #5c5c5c"></div>
<div class="a" style="left:0;top:624.5px;width:185px;height:24px;border-bottom:1px solid #454545;border-top:1px solid #5c5c5c"></div>
<div class="a" style="left:0;top:648.5px;width:185px;height:24px;border-bottom:1px solid #454545;border-top:1px solid #5c5c5c"></div>
<div class="a" style="left:0;top:672.5px;width:185px;height:24px;border-bottom:1px solid #454545;border-top:1px solid #5c5c5c"></div>
<div class="a" style="left:0;top:696.5px;width:185px;height:24px;border-bottom:1px solid #454545;border-top:1px solid #5c5c5c"></div>
<div class="t" style="left:138px;top:702.5px;color:#ececec">透明</div>
<div class="a" style="left:0;top:720.5px;width:185px;height:24px;border-bottom:1px solid #454545;border-top:1px solid #5c5c5c"></div>
<div class="a" style="left:0;top:744.5px;width:185px;height:24px;border-bottom:1px solid #454545;border-top:1px solid #5c5c5c"></div>
<div class="a" style="left:0;top:768.5px;width:185px;height:24px;border-bottom:1px solid #454545;border-top:1px solid #5c5c5c"></div>
<div class="a" style="left:0;top:792.5px;width:185px;height:24px;border-bottom:1px solid #454545;border-top:1px solid #5c5c5c"></div>
<div class="a" style="left:0;top:816.5px;width:185px;height:24px;border-bottom:1px solid #454545;border-top:1px solid #5c5c5c"></div>
<div class="a" style="left:0;top:840.5px;width:185px;height:24px;border-bottom:1px solid #454545;border-top:1px solid #5c5c5c"></div>
<div class="a" style="left:0;top:864.5px;width:185px;height:24px;border-bottom:1px solid #454545;border-top:1px solid #5c5c5c"></div>
</div>
<div class="a" id="charp" style="left:1525px;top:61px;width:60px;height:293px;background:#535353;border:1px solid #2a2a2a;border-radius:3px 0 0 2px;overflow:hidden">
<div class="a" style="left:0;top:0;width:60px;height:13px;background:#3a3a3a"></div>
<div class="a" style="left:0;top:13px;width:60px;height:17px;background:#424242;border-bottom:1px solid #2f2f2f"></div>
<div class="a" style="left:0;top:13px;width:40px;height:17px;background:#535353;border-right:1px solid #333;border-top:1px solid #666;color:#e4e4e4;line-height:15px;padding-left:8px">字符</div>
<div class="t" style="left:47px;top:16px;color:#9c9c9c">段落</div>
<div class="a" style="left:9px;top:35px;width:60px;height:21px;background:#3a3a3a;border:1px solid #2c2c2c;border-radius:2px;color:#f0f0f0;line-height:19px;padding-left:4px;white-space:nowrap">微软雅黑</div>
<div class="a" style="left:0;top:61px;width:60px;height:1px;background:#3d3d3d"></div><div class="a" style="left:0;top:62px;width:60px;height:1px;background:#626262"></div>
<div class="t" style="left:3px;top:71px;font-size:11px;font-family:'Liberation Serif',serif;color:#b8b8b8">T</div><div class="t" style="left:9px;top:65px;font-size:19px;font-family:'Liberation Serif',serif;color:#b8b8b8">T</div>
<div class="a" style="left:23px;top:67px;width:60px;height:20px;background:#3a3a3a;border:1px solid #2c2c2c;border-radius:2px;color:#f0f0f0;line-height:18px;padding-left:4px;white-space:nowrap">5 点</div>
<div class="t" style="left:2px;top:93px;font-size:15px;color:#b8b8b8;letter-spacing:-2px">V/A</div>
<div class="a" style="left:23px;top:91px;width:60px;height:20px;background:#3a3a3a;border:1px solid #2c2c2c;border-radius:2px;color:#f0f0f0;line-height:18px;padding-left:4px;white-space:nowrap">0</div>
<div class="a" style="left:0;top:117px;width:60px;height:1px;background:#3d3d3d"></div><div class="a" style="left:0;top:118px;width:60px;height:1px;background:#626262"></div>
<div class="t" style="left:5px;top:124px;font-size:12px;color:#b8b8b8">あ</div><div class="a" style="left:4px;top:123px;width:15px;height:1px;border-top:1px dotted #b8b8b8"></div><div class="t" style="left:3px;top:134px;font-size:8px;color:#b8b8b8">⇥⇤</div>
<div class="a" style="left:23px;top:121px;width:60px;height:20px;background:#3a3a3a;border:1px solid #2c2c2c;border-radius:2px;color:#f0f0f0;line-height:18px;padding-left:4px;white-space:nowrap">0%</div>
<div class="a" style="left:0;top:146px;width:60px;height:1px;background:#3d3d3d"></div><div class="a" style="left:0;top:147px;width:60px;height:1px;background:#626262"></div>
<div class="t" style="left:2px;top:154px;font-size:12px;color:#b8b8b8">↕</div><div class="t" style="left:9px;top:150px;font-size:19px;font-family:'Liberation Serif',serif;color:#b8b8b8">T</div>
<div class="a" style="left:23px;top:151px;width:60px;height:19px;background:#3a3a3a;border:1px solid #2c2c2c;border-radius:2px;color:#f0f0f0;line-height:17px;padding-left:4px;white-space:nowrap">100%</div>
<div class="t" style="left:3px;top:175px;font-size:13px;color:#b8b8b8;text-decoration:underline">A</div><div class="t" style="left:13px;top:173px;font-size:9px;color:#b8b8b8">a</div><div class="t" style="left:13px;top:181px;font-size:8px;color:#b8b8b8">↑</div>
<div class="a" style="left:23px;top:173px;width:60px;height:19px;background:#3a3a3a;border:1px solid #2c2c2c;border-radius:2px;color:#f0f0f0;line-height:17px;padding-left:4px;white-space:nowrap">0 点</div>
<div class="a" style="left:0;top:197px;width:60px;height:1px;background:#3d3d3d"></div><div class="a" style="left:0;top:198px;width:60px;height:1px;background:#626262"></div>
<div class="t" style="left:24px;top:204px;font-size:18px;font-weight:bold;font-family:'Liberation Serif',serif;color:#b8b8b8">T</div>
<div class="a" style="left:0;top:229px;width:60px;height:1px;background:#3d3d3d"></div><div class="a" style="left:0;top:230px;width:60px;height:1px;background:#626262"></div>
<div class="t" style="left:25px;top:238px;font-size:18px;font-family:'Liberation Serif',serif;color:#7c7c7c">fi</div>
<div class="a" style="left:0;top:260px;width:60px;height:1px;background:#3d3d3d"></div><div class="a" style="left:0;top:261px;width:60px;height:1px;background:#626262"></div>
<div class="a" style="left:7px;top:267px;width:60px;height:20px;border:1px solid #2f2f2f;border-radius:3px;background:linear-gradient(#6c6c6c,#595959);color:#f0f0f0;line-height:18px;padding-left:8px;white-space:nowrap;box-shadow:0 1px 0 #6a6a6a">美国英语</div>
</div>
<div class="a" id="histp" style="left:1318px;top:171px;width:206px;height:126px;background:#535353;border:1px solid #2a2a2a;border-radius:3px;overflow:hidden;box-shadow:0 1px 4px rgba(0,0,0,.5)">
<div class="a" style="left:0;top:0;width:206px;height:12px;background:#3a3a3a"></div>
<svg style="left:176px;top:3px" width="24" height="7" viewBox="0 0 24 7"><path d="M3.500 0L0 3.500 3.500 7zM8 0L4.500 3.500 8 7z" fill="#dcdcdc"/><path d="M17 0.500l5 5.500M22 0.500l-5 5.500" stroke="#e4e4e4" stroke-width="1.500"/></svg>
<div class="a" style="left:0;top:12px;width:206px;height:18px;background:#424242;border-bottom:1px solid #2f2f2f"></div>
<div class="a" style="left:0;top:12px;width:50px;height:18px;background:#535353;border-right:1px solid #333;border-top:1px solid #666;color:#e4e4e4;line-height:16px;padding-left:6px">直方图</div>
<svg style="left:188px;top:17px" width="14" height="8" viewBox="0 0 14 8"><path d="M0 2h5L2.500 5z" fill="#d8d8d8"/><path d="M6 1h8M6 3.500h8M6 6h8" stroke="#d8d8d8" stroke-width="1"/></svg>
<div class="a" style="left:5px;top:35px;width:195px;height:85px;background:#454545"></div>
<svg style="left:5px;top:36px" width="195" height="84" viewBox="0 0 196 84" preserveAspectRatio="none"><polygon points="0.0,84.0 0.0,58.0 1.0,58.0 1.0,70.0 2.0,70.0 2.0,77.7 3.0,77.7 3.0,81.3 4.0,81.3 4.0,42.0 5.0,42.0 5.0,79.6 6.0,79.6 6.0,81.5 7.0,81.5 7.0,78.9 8.0,78.9 8.0,81.8 9.0,81.8 9.0,79.5 10.0,79.5 10.0,41.0 11.0,41.0 11.0,81.6 12.0,81.6 12.0,79.7 13.0,79.7 13.0,77.4 14.0,77.4 14.0,81.6 15.0,81.6 15.0,81.1 16.0,81.1 16.0,78.7 17.0,78.7 17.0,69.4 18.0,69.4 18.0,70.8 19.0,70.8 19.0,71.1 20.0,71.1 20.0,66.8 21.0,66.8 21.0,71.6 22.0,71.6 22.0,65.9 23.0,65.9 23.0,68.6 24.0,68.6 24.0,59.0 25.0,59.0 25.0,69.6 26.0,69.6 26.0,69.3 27.0,69.3 27.0,67.1 28.0,67.1 28.0,71.7 29.0,71.7 29.0,70.2 30.0,70.2 30.0,70.7 31.0,70.7 31.0,32.0 32.0,32.0 32.0,72.2 33.0,72.2 33.0,75.6 34.0,75.6 34.0,76.1 35.0,76.1 35.0,75.2 36.0,75.2 36.0,72.3 37.0,72.3 37.0,73.7 38.0,73.7 38.0,74.3 39.0,74.3 39.0,72.6 40.0,72.6 40.0,73.3 41.0,73.3 41.0,74.1 42.0,74.1 42.0,71.1 43.0,71.1 43.0,71.6 44.0,71.6 44.0,74.2 45.0,74.2 45.0,72.1 46.0,72.1 46.0,72.3 47.0,72.3 47.0,62.2 48.0,62.2 48.0,63.0 49.0,63.0 49.0,65.6 50.0,65.6 50.0,61.3 51.0,61.3 51.0,66.4 52.0,66.4 52.0,64.5 53.0,64.5 53.0,62.4 54.0,62.4 54.0,66.0 55.0,66.0 55.0,63.8 56.0,63.8 56.0,66.4 57.0,66.4 57.0,62.6 58.0,62.6 58.0,61.9 59.0,61.9 59.0,61.8 60.0,61.8 60.0,58.7 61.0,58.7 61.0,60.9 62.0,60.9 62.0,57.3 63.0,57.3 63.0,59.2 64.0,59.2 64.0,41.0 65.0,41.0 65.0,62.5 66.0,62.5 66.0,61.5 67.0,61.5 67.0,58.0 68.0,58.0 68.0,64.3 69.0,64.3 69.0,63.5 70.0,63.5 70.0,67.5 71.0,67.5 71.0,64.0 72.0,64.0 72.0,64.6 73.0,64.6 73.0,63.5 74.0,63.5 74.0,65.6 75.0,65.6 75.0,69.8 76.0,69.8 76.0,70.2 77.0,70.2 77.0,69.5 78.0,69.5 78.0,74.4 79.0,74.4 79.0,72.2 80.0,72.2 80.0,74.5 81.0,74.5 81.0,75.3 82.0,75.3 82.0,76.1 83.0,76.1 83.0,72.4 84.0,72.4 84.0,76.7 85.0,76.7 85.0,75.7 86.0,75.7 86.0,74.4 87.0,74.4 87.0,71.2 88.0,71.2 88.0,75.6 89.0,75.6 89.0,73.0 90.0,73.0 90.0,72.0 91.0,72.0 91.0,69.7 92.0,69.7 92.0,69.7 93.0,69.7 93.0,69.0 94.0,69.0 94.0,72.2 95.0,72.2 95.0,71.0 96.0,71.0 96.0,71.6 97.0,71.6 97.0,68.6 98.0,68.6 98.0,68.4 99.0,68.4 99.0,73.5 100.0,73.5 100.0,73.6 101.0,73.6 101.0,73.4 102.0,73.4 102.0,73.7 103.0,73.7 103.0,72.4 104.0,72.4 104.0,72.0 105.0,72.0 105.0,73.4 106.0,73.4 106.0,74.5 107.0,74.5 107.0,71.5 108.0,71.5 108.0,71.3 109.0,71.3 109.0,69.6 110.0,69.6 110.0,66.8 111.0,66.8 111.0,68.2 112.0,68.2 112.0,69.2 113.0,69.2 113.0,68.4 114.0,68.4 114.0,67.9 115.0,67.9 115.0,71.6 116.0,71.6 116.0,66.4 117.0,66.4 117.0,66.9 118.0,66.9 118.0,66.3 119.0,66.3 119.0,66.2 120.0,66.2 120.0,68.1 121.0,68.1 121.0,67.6 122.0,67.6 122.0,68.9 123.0,68.9 123.0,65.2 124.0,65.2 124.0,68.1 125.0,68.1 125.0,68.4 126.0,68.4 126.0,67.9 127.0,67.9 127.0,68.5 128.0,68.5 128.0,68.7 129.0,68.7 129.0,71.6 130.0,71.6 130.0,73.1 131.0,73.1 131.0,73.4 132.0,73.4 132.0,74.9 133.0,74.9 133.0,73.9 134.0,73.9 134.0,76.5 135.0,76.5 135.0,72.0 136.0,72.0 136.0,74.1 137.0,74.1 137.0,77.5 138.0,77.5 138.0,77.4 139.0,77.4 139.0,77.4 140.0,77.4 140.0,75.6 141.0,75.6 141.0,75.3 142.0,75.3 142.0,69.2 143.0,69.2 143.0,66.5 144.0,66.5 144.0,69.5 145.0,69.5 145.0,69.1 146.0,69.1 146.0,71.2 147.0,71.2 147.0,70.9 148.0,70.9 148.0,71.2 149.0,71.2 149.0,73.4 150.0,73.4 150.0,71.8 151.0,71.8 151.0,77.5 152.0,77.5 152.0,78.5 153.0,78.5 153.0,73.0 154.0,73.0 154.0,75.7 155.0,75.7 155.0,78.1 156.0,78.1 156.0,75.8 157.0,75.8 157.0,79.0 158.0,79.0 158.0,76.1 159.0,76.1 159.0,73.5 160.0,73.5 160.0,74.3 161.0,74.3 161.0,75.0 162.0,75.0 162.0,77.3 163.0,77.3 163.0,76.3 164.0,76.3 164.0,77.2 165.0,77.2 165.0,73.2 166.0,73.2 166.0,74.3 167.0,74.3 167.0,70.5 168.0,70.5 168.0,70.9 169.0,70.9 169.0,69.2 170.0,69.2 170.0,69.6 171.0,69.6 171.0,72.6 172.0,72.6 172.0,73.7 173.0,73.7 173.0,74.3 174.0,74.3 174.0,77.0 175.0,77.0 175.0,46.0 176.0,46.0 176.0,46.0 177.0,46.0 177.0,16.0 178.0,16.0 178.0,16.0 179.0,16.0 179.0,16.0 180.0,16.0 180.0,16.0 181.0,16.0 181.0,69.1 182.0,69.1 182.0,68.9 183.0,68.9 183.0,71.6 184.0,71.6 184.0,76.9 185.0,76.9 185.0,77.4 186.0,77.4 186.0,78.8 187.0,78.8 187.0,81.1 188.0,81.1 188.0,58.0 189.0,58.0 189.0,80.4 190.0,80.4 190.0,80.9 191.0,80.9 191.0,78.3 192.0,78.3 192.0,76.8 193.0,76.8 193.0,79.8 194.0,79.8 194.0,0.0 195.0,0.0 195.0,76.6 196.0,76.6 196.0,84.0" fill="#fff"/></svg>
<div class="a" style="left:182px;top:36px;width:3px;height:6px;background:#fff"></div>
<svg style="left:182px;top:43px" width="13" height="12" viewBox="0 0 13 12"><path d="M6.500 0L13 12H0z" fill="#c8c8c8"/><path d="M6.500 4v4M6.500 9.200v1.300" stroke="#333" stroke-width="1.600"/></svg>
</div>
<div class="a" id="layp" style="left:1300px;top:372px;width:243px;height:580px;background:#535353;border:1px solid #2a2a2a;border-radius:3px 3px 0 0;overflow:hidden;box-shadow:0 1px 4px rgba(0,0,0,.5)">
<div class="a" style="left:0;top:0;width:242px;height:12px;background:#3a3a3a"></div>
<svg style="left:212px;top:3px" width="24" height="7" viewBox="0 0 24 7"><path d="M3.500 0L0 3.500 3.500 7zM8 0L4.500 3.500 8 7z" fill="#dcdcdc"/><path d="M17 0.500l5 5.500M22 0.500l-5 5.500" stroke="#e4e4e4" stroke-width="1.500"/></svg>
<div class="a" style="left:0;top:12px;width:242px;height:17px;background:#424242;border-bottom:1px solid #2f2f2f"></div>
<div class="a" style="left:0;top:12px;width:39px;height:17px;background:#535353;border-right:1px solid #333;border-top:1px solid #666;color:#e8e8e8;line-height:18px;padding-left:7px">图层</div>
<div class="a" style="left:39px;top:12px;width:40px;height:16px;background:#474747;border-right:1px solid #333;color:#9c9c9c;line-height:19px;padding-left:7px">通道</div>
<div class="a" style="left:79px;top:12px;width:40px;height:16px;background:#474747;border-right:1px solid #333;color:#9c9c9c;line-height:19px;padding-left:7px">路径</div>
<svg style="left:223px;top:16px" width="14" height="8" viewBox="0 0 14 8"><path d="M0 2h5L2.500 5z" fill="#d8d8d8"/><path d="M6 1h8M6 3.500h8M6 6h8" stroke="#d8d8d8" stroke-width="1"/></svg>
<div class="a" style="left:4px;top:33px;width:71px;height:20px;border:1px solid #2f2f2f;border-radius:3px;background:linear-gradient(#6e6e6e,#5a5a5a);color:#f2f2f2;line-height:18px;padding-left:22px;white-space:nowrap;box-shadow:0 1px 0 #676767">类型</div>
<svg style="left:63px;top:37px" width="7" height="11" viewBox="0 0 7 11"><path d="M0 4.500L3.500 1 7 4.500zM0 6.500L3.500 10 7 6.500z" fill="#eaeaea"/></svg>
<svg style="left:10px;top:38px" width="11" height="11" viewBox="0 0 11 11"><circle cx="6.500" cy="4.500" r="3" fill="none" stroke="#d8d8d8" stroke-width="1.300"/><path d="M4.500 6.500L1 10" stroke="#d8d8d8" stroke-width="1.600"/></svg>
<svg style="left:96px;top:36px" width="130" height="16" viewBox="0 0 130 16"><rect x="0.500" y="2.500" width="12" height="10" fill="none" stroke="#c4c4c4" stroke-width="1.100"/><path d="M2 11l3-4 2 2 2-1.500 2.500 3.500z" fill="#c4c4c4"/><circle cx="9.500" cy="5.500" r="1" fill="#c4c4c4"/><circle cx="30" cy="7.500" r="5" fill="none" stroke="#c4c4c4" stroke-width="1.200"/><path d="M26.500 11a5 5 0 0 1 7-7z" fill="#c4c4c4"/><text x="48" y="13" font-family="Liberation Serif,serif" font-size="16" fill="#c4c4c4">T</text><rect x="73.500" y="3.500" width="9" height="8" fill="none" stroke="#c4c4c4" stroke-width="1.100"/><rect x="72" y="2" width="3" height="3" fill="#c4c4c4"/><rect x="81" y="2" width="3" height="3" fill="#c4c4c4"/><rect x="72" y="10" width="3" height="3" fill="#c4c4c4"/><rect x="81" y="10" width="3" height="3" fill="#c4c4c4"/><path d="M100 2h5l3 3v8h-8z" fill="none" stroke="#c4c4c4" stroke-width="1.100"/><rect x="97" y="8" width="6" height="6" fill="#c4c4c4"/></svg>
<div class="a" style="left:226px;top:34px;width:9px;height:17px;border:1px solid #333;background:linear-gradient(#999 0,#777 45%,#3c3c3c 45%,#444 100%);border-radius:1px"></div>
<div class="a" style="left:0;top:57px;width:242px;height:1px;background:#3f3f3f"></div><div class="a" style="left:0;top:58px;width:242px;height:1px;background:#606060"></div>
<div class="a" style="left:4px;top:62px;width:111px;height:20px;border:1px solid #2f2f2f;border-radius:3px;background:linear-gradient(#6e6e6e,#5a5a5a);color:#f2f2f2;line-height:18px;padding-left:8px;white-space:nowrap;box-shadow:0 1px 0 #676767">正常</div>
<svg style="left:103px;top:66px" width="7" height="11" viewBox="0 0 7 11"><path d="M0 4.500L3.500 1 7 4.500zM0 6.500L3.500 10 7 6.500z" fill="#eaeaea"/></svg>
<div class="t" style="left:122px;top:66px;color:#ececec">不透明度:</div>
<div class="a" style="left:179px;top:62.0px;width:37px;height:20px;background:#3a3a3a;border:1px solid #2c2c2c;border-radius:2px 0 0 2px;color:#f0f0f0;line-height:18px;padding-left:2px;letter-spacing:-.3px">100%</div>
<div class="a" style="left:216px;top:62.0px;width:19px;height:20px;border:1px solid #2c2c2c;border-left:0;border-radius:0 2px 2px 0;background:linear-gradient(#747474,#5e5e5e)"></div>
<div class="a" style="left:222px;top:70.0px;width:0;height:0;border-left:3px solid transparent;border-right:3px solid transparent;border-top:4px solid #f0f0f0"></div>
<div class="a" style="left:0;top:86px;width:242px;height:1px;background:#3f3f3f"></div><div class="a" style="left:0;top:87px;width:242px;height:1px;background:#606060"></div>
<div class="t" style="left:6px;top:93.5px;color:#ececec">锁定:</div>
<svg style="left:43px;top:90px" width="80" height="18" viewBox="0 0 80 18"><rect x="0" y="4" width="11" height="11" fill="#777"/><rect x="0" y="4" width="3.700" height="3.700" fill="#999"/><rect x="7.300" y="4" width="3.700" height="3.700" fill="#999"/><rect x="3.700" y="7.700" width="3.700" height="3.700" fill="#999"/><rect x="0" y="11.300" width="3.700" height="3.700" fill="#999"/><rect x="7.300" y="11.300" width="3.700" height="3.700" fill="#999"/><path d="M37.500 1.500l1.300 1.200-8.300 10-2.200-1.800zM27.500 11.500l2.200 1.900c-1.200 3-4.700 3.400-8.200 2.800 3-.6 3.300-3.200 6-4.700z" fill="#8f8f8f"/><path d="M50 3v12M44 9h12M50 2.500l-2 2.500h4zM50 15.500l-2-2.500h4zM43.500 9l2.500-2v4zM56.500 9l-2.500-2v4z" stroke="#c8c8c8" stroke-width="1.100" fill="#c8c8c8"/><rect x="67" y="8" width="10" height="8" rx="1" fill="#c0c0c0"/><path d="M69 8V6a3 3 0 0 1 6 0v2" fill="none" stroke="#c0c0c0" stroke-width="1.500"/><rect x="71.300" y="10.500" width="1.500" height="3" fill="#444"/></svg>
<div class="t" style="left:147px;top:93.5px;color:#ececec">填充:</div>
<div class="a" style="left:179px;top:90.5px;width:37px;height:20px;background:#3a3a3a;border:1px solid #2c2c2c;border-radius:2px 0 0 2px;color:#f0f0f0;line-height:18px;padding-left:2px;letter-spacing:-.3px">100%</div>
<div class="a" style="left:216px;top:90.5px;width:19px;height:20px;border:1px solid #2c2c2c;border-left:0;border-radius:0 2px 2px 0;background:linear-gradient(#747474,#5e5e5e)"></div>
<div class="a" style="left:222px;top:98.5px;width:0;height:0;border-left:3px solid transparent;border-right:3px solid transparent;border-top:4px solid #f0f0f0"></div>
<div class="a" style="left:0;top:115px;width:242px;height:1px;background:#333"></div>
<div class="a" style="left:0;top:106px;width:227px;height:39px;border-bottom:1px solid #404040"></div>
<svg style="left:8px;top:121.0px" width="14" height="10" viewBox="0 0 14 10"><path d="M0.500 5C3 1 11 1 13.500 5 11 9 3 9 0.500 5z" fill="#d0d0d0"/><circle cx="7" cy="5" r="2.700" fill="#4a4a4a"/><circle cx="7" cy="5" r="1.400" fill="#1c1c1c"/><circle cx="6" cy="4" r=".7" fill="#e8e8e8"/></svg>
<div class="t" style="left:72px;top:115px;font-family:'Liberation Serif',serif;font-size:22px;font-weight:bold;color:#b4b4b4">T</div>
<div class="t" style="left:107px;top:121px;color:#f0f0f0">了解详情 副本</div>
<div class="a" style="left:0;top:145px;width:227px;height:39px;border-bottom:1px solid #404040"></div>
<svg style="left:8px;top:160.0px" width="14" height="10" viewBox="0 0 14 10"><path d="M0.500 5C3 1 11 1 13.500 5 11 9 3 9 0.500 5z" fill="#d0d0d0"/><circle cx="7" cy="5" r="2.700" fill="#4a4a4a"/><circle cx="7" cy="5" r="1.400" fill="#1c1c1c"/><circle cx="6" cy="4" r=".7" fill="#e8e8e8"/></svg>
<div class="a" style="left:65px;top:149px;width:13px;height:32px;border:1px solid #000;background:conic-gradient(#fff 25%,#ccc 0 50%,#fff 0 75%,#ccc 0);background-size:8px 8px;background-position:1px 0"></div>
<div class="t" style="left:86px;top:160px;color:#f0f0f0">图层 25 副本</div>
<div class="a" style="left:0;top:184px;width:227px;height:39px;border-bottom:1px solid #404040"></div>
<svg style="left:8px;top:199.0px" width="14" height="10" viewBox="0 0 14 10"><path d="M0.500 5C3 1 11 1 13.500 5 11 9 3 9 0.500 5z" fill="#d0d0d0"/><circle cx="7" cy="5" r="2.700" fill="#4a4a4a"/><circle cx="7" cy="5" r="1.400" fill="#1c1c1c"/><circle cx="6" cy="4" r=".7" fill="#e8e8e8"/></svg>
<div class="t" style="left:72px;top:193px;font-family:'Liberation Serif',serif;font-size:22px;font-weight:bold;color:#b4b4b4">T</div>
<div class="t" style="left:107px;top:199px;color:#f0f0f0">塑料打包带</div>
<div class="a" style="left:0;top:223px;width:227px;height:39px;border-bottom:1px solid #404040"></div>
<svg style="left:8px;top:238.0px" width="14" height="10" viewBox="0 0 14 10"><path d="M0.500 5C3 1 11 1 13.500 5 11 9 3 9 0.500 5z" fill="#d0d0d0"/><circle cx="7" cy="5" r="2.700" fill="#4a4a4a"/><circle cx="7" cy="5" r="1.400" fill="#1c1c1c"/><circle cx="6" cy="4" r=".7" fill="#e8e8e8"/></svg>
<div class="t" style="left:72px;top:232px;font-family:'Liberation Serif',serif;font-size:22px;font-weight:bold;color:#b4b4b4">T</div>
<div class="t" style="left:107px;top:238px;color:#f0f0f0">了解详情</div>
<div class="a" style="left:0;top:262px;width:227px;height:39px;border-bottom:1px solid #404040"></div>
<svg style="left:8px;top:277.0px" width="14" height="10" viewBox="0 0 14 10"><path d="M0.500 5C3 1 11 1 13.500 5 11 9 3 9 0.500 5z" fill="#d0d0d0"/><circle cx="7" cy="5" r="2.700" fill="#4a4a4a"/><circle cx="7" cy="5" r="1.400" fill="#1c1c1c"/><circle cx="6" cy="4" r=".7" fill="#e8e8e8"/></svg>
<div class="a" style="left:65px;top:266px;width:13px;height:32px;border:1px solid #000;background:conic-gradient(#fff 25%,#ccc 0 50%,#fff 0 75%,#ccc 0);background-size:8px 8px;background-position:1px 0"></div>
<div class="t" style="left:86px;top:277px;color:#f0f0f0">图层 25</div>
<div class="a" style="left:0;top:301px;width:227px;height:39px;border-bottom:1px solid #404040"></div>
<svg style="left:8px;top:316.0px" width="14" height="10" viewBox="0 0 14 10"><path d="M0.500 5C3 1 11 1 13.500 5 11 9 3 9 0.500 5z" fill="#d0d0d0"/><circle cx="7" cy="5" r="2.700" fill="#4a4a4a"/><circle cx="7" cy="5" r="1.400" fill="#1c1c1c"/><circle cx="6" cy="4" r=".7" fill="#e8e8e8"/></svg>
<div class="a" style="left:65px;top:305px;width:13px;height:32px;border:1px solid #000;background:conic-gradient(#fff 25%,#ccc 0 50%,#fff 0 75%,#ccc 0);background-size:8px 8px;background-position:1px 0"></div>
<div class="t" style="left:86px;top:316px;color:#f0f0f0">产品图 副本 3</div>
<div class="a" style="left:0;top:340px;width:227px;height:39px;border-bottom:1px solid #404040"></div>
<svg style="left:8px;top:355.0px" width="14" height="10" viewBox="0 0 14 10"><path d="M0.500 5C3 1 11 1 13.500 5 11 9 3 9 0.500 5z" fill="#d0d0d0"/><circle cx="7" cy="5" r="2.700" fill="#4a4a4a"/><circle cx="7" cy="5" r="1.400" fill="#1c1c1c"/><circle cx="6" cy="4" r=".7" fill="#e8e8e8"/></svg>
<div class="a" style="left:65px;top:344px;width:13px;height:32px;border:1px solid #000;background:conic-gradient(#fff 25%,#ccc 0 50%,#fff 0 75%,#ccc 0);background-size:8px 8px;background-position:1px 0"></div>
<div class="t" style="left:86px;top:355px;color:#f0f0f0">产品图 副本 2</div>
<div class="a" style="left:0;top:379px;width:227px;height:39px;border-bottom:1px solid #404040"></div>
<svg style="left:8px;top:394.0px" width="14" height="10" viewBox="0 0 14 10"><path d="M0.500 5C3 1 11 1 13.500 5 11 9 3 9 0.500 5z" fill="#d0d0d0"/><circle cx="7" cy="5" r="2.700" fill="#4a4a4a"/><circle cx="7" cy="5" r="1.400" fill="#1c1c1c"/><circle cx="6" cy="4" r=".7" fill="#e8e8e8"/></svg>
<div class="a" style="left:65px;top:383px;width:13px;height:32px;border:1px solid #000;background:conic-gradient(#fff 25%,#ccc 0 50%,#fff 0 75%,#ccc 0);background-size:8px 8px;background-position:1px 0"></div>
<div class="t" style="left:86px;top:394px;color:#f0f0f0">产品图 副本</div>
<div class="a" style="left:0;top:418px;width:227px;height:39px;border-bottom:1px solid #404040"></div>
<svg style="left:8px;top:433.0px" width="14" height="10" viewBox="0 0 14 10"><path d="M0.500 5C3 1 11 1 13.500 5 11 9 3 9 0.500 5z" fill="#d0d0d0"/><circle cx="7" cy="5" r="2.700" fill="#4a4a4a"/><circle cx="7" cy="5" r="1.400" fill="#1c1c1c"/><circle cx="6" cy="4" r=".7" fill="#e8e8e8"/></svg>
<div class="a" style="left:65px;top:422px;width:13px;height:32px;border:1px solid #000;background:conic-gradient(#fff 25%,#ccc 0 50%,#fff 0 75%,#ccc 0);background-size:8px 8px;background-position:1px 0"></div>
<div class="t" style="left:86px;top:433px;color:#f0f0f0">产品图</div>
<div class="a" style="left:0;top:457px;width:227px;height:39px;border-bottom:1px solid #404040"></div>
<svg style="left:8px;top:472.0px" width="14" height="10" viewBox="0 0 14 10"><path d="M0.500 5C3 1 11 1 13.500 5 11 9 3 9 0.500 5z" fill="#d0d0d0"/><circle cx="7" cy="5" r="2.700" fill="#4a4a4a"/><circle cx="7" cy="5" r="1.400" fill="#1c1c1c"/><circle cx="6" cy="4" r=".7" fill="#e8e8e8"/></svg>
<div class="t" style="left:72px;top:466px;font-family:'Liberation Serif',serif;font-size:22px;font-weight:bold;color:#b4b4b4">T</div>
<div class="t" style="left:107px;top:472px;color:#f0f0f0">探索更多 ></div>
<div class="a" style="left:0;top:496px;width:227px;height:39px;"></div>
<svg style="left:8px;top:511.0px" width="14" height="10" viewBox="0 0 14 10"><path d="M0.500 5C3 1 11 1 13.500 5 11 9 3 9 0.500 5z" fill="#d0d0d0"/><circle cx="7" cy="5" r="2.700" fill="#4a4a4a"/><circle cx="7" cy="5" r="1.400" fill="#1c1c1c"/><circle cx="6" cy="4" r=".7" fill="#e8e8e8"/></svg>
<div class="a" style="left:65px;top:500px;width:13px;height:32px;border:1px solid #000;background:conic-gradient(#fff 25%,#ccc 0 50%,#fff 0 75%,#ccc 0);background-size:8px 8px;background-position:1px 0"></div>
<div class="t" style="left:86px;top:511px;color:#f0f0f0">圆圈 副本 3</div>
<div class="a" style="left:30px;top:116px;width:1px;height:470px;background:#404040"></div>
<div class="t" style="left:199px;top:508px;font-family:'Liberation Serif',serif;font-style:italic;font-size:15px;color:#c0c0c0">fx</div>
<div class="a" style="left:215px;top:497px;width:11px;height:38px;background:linear-gradient(#8a8a8a,#5e5e5e);border-radius:1px"></div>
<div class="a" style="left:217px;top:510px;width:0;height:0;border-left:3px solid transparent;border-right:3px solid transparent;border-bottom:4px solid #eee"></div>
<svg style="left:79px;top:540.0px" width="14" height="10" viewBox="0 0 14 10"><path d="M0.500 5C3 1 11 1 13.500 5 11 9 3 9 0.500 5z" fill="#d0d0d0"/><circle cx="7" cy="5" r="2.700" fill="#4a4a4a"/><circle cx="7" cy="5" r="1.400" fill="#1c1c1c"/><circle cx="6" cy="4" r=".7" fill="#e8e8e8"/></svg>
<div class="t" style="left:99px;top:540px;color:#f0f0f0">效果</div>
<svg style="left:98px;top:558.0px" width="14" height="10" viewBox="0 0 14 10"><path d="M0.500 5C3 1 11 1 13.500 5 11 9 3 9 0.500 5z" fill="#d0d0d0"/><circle cx="7" cy="5" r="2.700" fill="#4a4a4a"/><circle cx="7" cy="5" r="1.400" fill="#1c1c1c"/><circle cx="6" cy="4" r=".7" fill="#e8e8e8"/></svg>
<div class="t" style="left:117px;top:558px;color:#f0f0f0">颜色叠加</div>
<div class="a" style="left:226px;top:116px;width:16px;height:470px;background:#3e3e3e;border-left:1px solid #333"></div>
<div class="a" style="left:230px;top:125px;width:0;height:0;border-left:3px solid transparent;border-right:3px solid transparent;border-bottom:3px solid #e0e0e0"></div>
<div class="a" style="left:228px;top:434px;width:12px;height:160px;border-radius:3px;background:linear-gradient(90deg,#5a5a5a,#8c8c8c 50%,#6c6c6c)"></div>
</div>
</body></html>
